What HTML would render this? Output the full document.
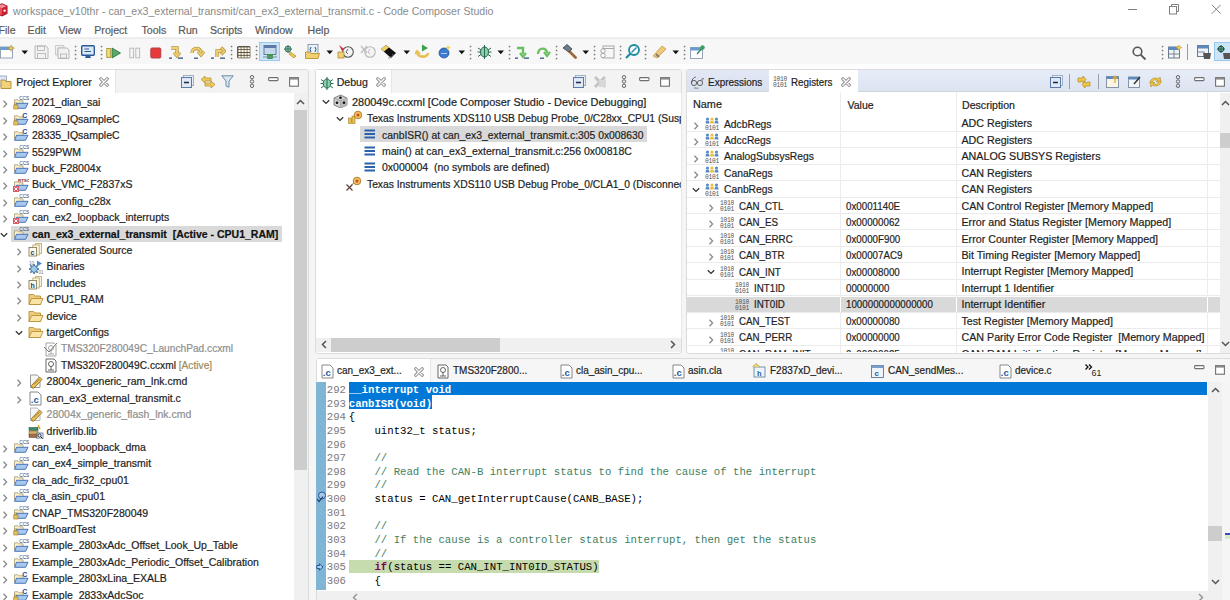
<!DOCTYPE html><html><head><meta charset="utf-8"><style>html,body{margin:0;padding:0;width:1230px;height:600px;overflow:hidden;background:#f0f0f0;position:relative;font-family:"Liberation Sans",sans-serif;}.t{position:absolute;white-space:pre;line-height:14px;height:14px;-webkit-text-stroke:0.2px currentColor;}.r{position:absolute;display:block;}</style></head><body>
<div class="r" style="left:0.0px;top:69.0px;width:1230.0px;height:531.0px;background:#f5f5f5;"></div>
<div class="r" style="left:0.0px;top:0.0px;width:1230.0px;height:37.0px;background:#ffffff;"></div>
<svg class="r" style="left:-4.0px;top:3.0px;" width="12" height="13.5" viewBox="0 0 12 13.5"><path d="M1 3 L6 0.8 L11 3 L11 10.3 L6 12.8 L1 10.3 Z" fill="#e8505a" stroke="#a81828" stroke-width="1.1"/><path d="M1.5 3.2 L6 1.2 L10.5 3.2 L6 5.3 Z" fill="#f49098"/><path d="M6 5.3 L11 3 L11 10.3 L6 12.8 Z" fill="#c82030"/><circle cx="8.6" cy="7.6" r="1.2" fill="#fff"/></svg>
<div class="t" style="left:13.0px;top:3.9px;font-size:10.6px;color:#8a8a8a;-webkit-text-stroke:0;">workspace_v10thr - can_ex3_external_transmit/can_ex3_external_transmit.c - Code Composer Studio</div>
<div class="r" style="left:1128.0px;top:9.0px;width:9.0px;height:1.0px;background:#808080;"></div>
<svg class="r" style="left:1168.5px;top:4.0px;" width="10" height="10.5" viewBox="0 0 10 10.5"><rect x="0.5" y="2.5" width="7" height="7.5" fill="none" stroke="#808080" stroke-width="1"/><path d="M2.5 2.5 V0.5 H9.5 V7.5 H7.5" fill="none" stroke="#808080" stroke-width="1"/></svg>
<svg class="r" style="left:1210.5px;top:4.0px;" width="10.5" height="10.5" viewBox="0 0 10.5 10.5"><path d="M0.8 0.8 L9.7 9.7 M9.7 0.8 L0.8 9.7" stroke="#808080" stroke-width="1"/></svg>
<div class="t" style="left:-1.5px;top:22.6px;font-size:10.6px;color:#5a5a5a;">File</div>
<div class="t" style="left:27.6px;top:22.6px;font-size:10.6px;color:#5a5a5a;">Edit</div>
<div class="t" style="left:58.5px;top:22.6px;font-size:10.6px;color:#5a5a5a;">View</div>
<div class="t" style="left:94.3px;top:22.6px;font-size:10.6px;color:#5a5a5a;">Project</div>
<div class="t" style="left:141.5px;top:22.6px;font-size:10.6px;color:#5a5a5a;">Tools</div>
<div class="t" style="left:178.3px;top:22.6px;font-size:10.6px;color:#5a5a5a;">Run</div>
<div class="t" style="left:210.0px;top:22.6px;font-size:10.6px;color:#5a5a5a;">Scripts</div>
<div class="t" style="left:255.0px;top:22.6px;font-size:10.6px;color:#5a5a5a;">Window</div>
<div class="t" style="left:307.5px;top:22.6px;font-size:10.6px;color:#5a5a5a;">Help</div>
<div class="r" style="left:0.0px;top:37.5px;width:1230.0px;height:1.0px;background:#ececec;"></div>
<div class="r" style="left:0.0px;top:38.5px;width:1230.0px;height:25.5px;background:#f7f7f7;"></div>
<div class="r" style="left:0.0px;top:64.0px;width:1230.0px;height:5.0px;background:#fdfdfd;"></div>
<svg class="r" style="left:0.0px;top:45.0px;" width="15" height="14" viewBox="0 0 15 14"><rect x="0.5" y="2" width="12" height="11" fill="#fff" stroke="#8a9ab0" stroke-width="0.9"/><rect x="0.5" y="2" width="12" height="3" fill="#6a9ad0"/><path d="M11 0 L12 2.5 L14.5 3 L12 4 L11 6.5 L10 4 L7.5 3 L10 2.5 Z" fill="#f0d060" stroke="#b09020" stroke-width="0.5"/></svg>
<svg class="r" style="left:21.0px;top:50.0px;" width="8" height="5" viewBox="0 0 8 5"><path d="M0.5 0.5 L7 0.5 L3.75 4.2 Z" fill="#111"/></svg>
<svg class="r" style="left:34.0px;top:45.0px;" width="15" height="14" viewBox="0 0 15 14"><path d="M1 1 H12 L14 3 V13.5 H1 Z" fill="#f2f2f2" stroke="#b8b8b8" stroke-width="1"/><rect x="3.5" y="1" width="7" height="4.5" fill="none" stroke="#b8b8b8" stroke-width="0.9"/><rect x="3.5" y="8.5" width="8" height="5" fill="none" stroke="#b8b8b8" stroke-width="0.9"/></svg>
<svg class="r" style="left:55.0px;top:45.0px;" width="15" height="14" viewBox="0 0 15 14"><path d="M0.5 0.5 H9 V3 H3 V10 H0.5 Z" fill="#eee" stroke="#c0c0c0" stroke-width="0.8"/><path d="M3 3 H12 L14 5 V13.5 H3 Z" fill="#f2f2f2" stroke="#b8b8b8" stroke-width="1"/><rect x="5.5" y="9" width="6" height="4" fill="none" stroke="#b8b8b8" stroke-width="0.9"/></svg>
<svg class="r" style="left:74.0px;top:45.0px;" width="3" height="15" viewBox="0 0 3 15"><rect x="0.8" y="0.8" width="1.5" height="1.5" fill="#7a7a7a"/><rect x="0.8" y="4.8" width="1.5" height="1.5" fill="#7a7a7a"/><rect x="0.8" y="8.8" width="1.5" height="1.5" fill="#7a7a7a"/><rect x="0.8" y="12.8" width="1.5" height="1.5" fill="#7a7a7a"/></svg>
<svg class="r" style="left:81.0px;top:45.0px;" width="14" height="14" viewBox="0 0 14 14"><rect x="0.7" y="0.7" width="12.6" height="9.5" rx="1" fill="#dde8f4" stroke="#2a5a9a" stroke-width="1.4"/><path d="M3.5 4 H8 M3.5 6.5 H10" stroke="#2a5a9a" stroke-width="1"/><path d="M4 13 H10 L9 10.5 H5 Z" fill="#2a5a9a"/></svg>
<svg class="r" style="left:99.5px;top:45.0px;" width="3" height="15" viewBox="0 0 3 15"><rect x="0.8" y="0.8" width="1.5" height="1.5" fill="#7a7a7a"/><rect x="0.8" y="4.8" width="1.5" height="1.5" fill="#7a7a7a"/><rect x="0.8" y="8.8" width="1.5" height="1.5" fill="#7a7a7a"/><rect x="0.8" y="12.8" width="1.5" height="1.5" fill="#7a7a7a"/></svg>
<svg class="r" style="left:106.0px;top:46.5px;" width="15" height="12" viewBox="0 0 15 12"><rect x="0.8" y="1.5" width="3.5" height="9" fill="#f4e47a" stroke="#a89030" stroke-width="0.9"/><path d="M6 1 L14.5 6 L6 11 Z" fill="#5aaa6a" stroke="#2a6a3a" stroke-width="0.8"/></svg>
<svg class="r" style="left:129.0px;top:46.5px;" width="12" height="12" viewBox="0 0 12 12"><rect x="0.8" y="1.2" width="3.8" height="9.6" fill="#f4f4f4" stroke="#bcbcbc" stroke-width="1"/><rect x="6.8" y="1.2" width="3.8" height="9.6" fill="#f4f4f4" stroke="#bcbcbc" stroke-width="1"/></svg>
<svg class="r" style="left:150.0px;top:46.5px;" width="12" height="12" viewBox="0 0 12 12"><rect x="0.8" y="1" width="10" height="10" rx="1.2" fill="#e8383a" stroke="#b04048" stroke-width="1"/></svg>
<svg class="r" style="left:169.0px;top:45.0px;" width="15" height="14" viewBox="0 0 15 14"><path d="M2 3 H8 L8 9" fill="none" stroke="#b89848" stroke-width="3.4"/><path d="M5 7.5 L8 11 L11 7.5" fill="none" stroke="#b89848" stroke-width="3.2"/><path d="M2 3 H8 L8 9" fill="none" stroke="#f0d070" stroke-width="1.8"/><path d="M5 7.5 L8 11 L11 7.5" fill="none" stroke="#f0d070" stroke-width="1.6"/><path d="M0 13.2 H3 M9 13.2 H14" stroke="#2a4a7a" stroke-width="1.2"/></svg>
<svg class="r" style="left:190.0px;top:45.0px;" width="15" height="14" viewBox="0 0 15 14"><path d="M2 8 C2 2 11 2 11 7.5" fill="none" stroke="#b89848" stroke-width="3.4"/><path d="M8 6.5 L11 10 L14 6.5" fill="none" stroke="#b89848" stroke-width="3.2"/><path d="M2 8 C2 2 11 2 11 7.5" fill="none" stroke="#f0d070" stroke-width="1.8"/><path d="M8 6.5 L11 10 L14 6.5" fill="none" stroke="#f0d070" stroke-width="1.6"/><path d="M4 13.2 H8" stroke="#2a4a7a" stroke-width="1.2"/></svg>
<svg class="r" style="left:211.0px;top:45.0px;" width="15" height="14" viewBox="0 0 15 14"><path d="M6 12 V6 H10.5" fill="none" stroke="#b89848" stroke-width="3.4"/><path d="M10 2.5 L13.5 6 L10 9.5" fill="none" stroke="#b89848" stroke-width="3.2"/><path d="M6 12 V6 H10.5" fill="none" stroke="#f0d070" stroke-width="1.8"/><path d="M10 2.5 L13.5 6 L10 9.5" fill="none" stroke="#f0d070" stroke-width="1.6"/><path d="M0 13.2 H3 M9 13.2 H14" stroke="#2a4a7a" stroke-width="1.2"/></svg>
<svg class="r" style="left:230.0px;top:45.0px;" width="3" height="15" viewBox="0 0 3 15"><rect x="0.8" y="0.8" width="1.5" height="1.5" fill="#7a7a7a"/><rect x="0.8" y="4.8" width="1.5" height="1.5" fill="#7a7a7a"/><rect x="0.8" y="8.8" width="1.5" height="1.5" fill="#7a7a7a"/><rect x="0.8" y="12.8" width="1.5" height="1.5" fill="#7a7a7a"/></svg>
<svg class="r" style="left:237.0px;top:46.0px;" width="14" height="13" viewBox="0 0 14 13"><rect x="0.3" y="0.3" width="13" height="12" rx="1" fill="#2a2010"/><rect x="1.3" y="1.3" width="2.5" height="2.1" fill="#fbf6e4"/><rect x="1.3" y="4.0" width="2.5" height="2.1" fill="#fbf6e4"/><rect x="1.3" y="6.8" width="2.5" height="2.1" fill="#fbf6e4"/><rect x="1.3" y="9.6" width="2.5" height="2.1" fill="#fbf6e4"/><rect x="4.3" y="1.3" width="2.5" height="2.1" fill="#fbf6e4"/><rect x="4.3" y="4.0" width="2.5" height="2.1" fill="#fbf6e4"/><rect x="4.3" y="6.8" width="2.5" height="2.1" fill="#fbf6e4"/><rect x="4.3" y="9.6" width="2.5" height="2.1" fill="#fbf6e4"/><rect x="7.3" y="1.3" width="2.5" height="2.1" fill="#fbf6e4"/><rect x="7.3" y="4.0" width="2.5" height="2.1" fill="#fbf6e4"/><rect x="7.3" y="6.8" width="2.5" height="2.1" fill="#fbf6e4"/><rect x="7.3" y="9.6" width="2.5" height="2.1" fill="#fbf6e4"/><rect x="10.3" y="1.3" width="2.5" height="2.1" fill="#fbf6e4"/><rect x="10.3" y="4.0" width="2.5" height="2.1" fill="#fbf6e4"/><rect x="10.3" y="6.8" width="2.5" height="2.1" fill="#fbf6e4"/><rect x="10.3" y="9.6" width="2.5" height="2.1" fill="#fbf6e4"/></svg>
<svg class="r" style="left:255.4px;top:45.0px;" width="3" height="15" viewBox="0 0 3 15"><rect x="0.8" y="0.8" width="1.5" height="1.5" fill="#7a7a7a"/><rect x="0.8" y="4.8" width="1.5" height="1.5" fill="#7a7a7a"/><rect x="0.8" y="8.8" width="1.5" height="1.5" fill="#7a7a7a"/><rect x="0.8" y="12.8" width="1.5" height="1.5" fill="#7a7a7a"/></svg>
<div class="r" style="left:259.0px;top:41.7px;width:21.0px;height:19.5px;background:#cce4f7;border:1px solid #99c9ef;box-sizing:border-box;"></div>
<svg class="r" style="left:263.0px;top:45.0px;" width="14" height="14" viewBox="0 0 14 14"><rect x="1" y="0.5" width="12" height="9" fill="#c8d8ec" stroke="#5a7090" stroke-width="0.9"/><rect x="1" y="0.5" width="12" height="2.5" fill="#5a7aa8"/><rect x="4" y="9" width="6" height="5" rx="1" fill="#3a9a4a"/><path d="M0 12 H14" stroke="#7a8a9a" stroke-width="1"/></svg>
<svg class="r" style="left:284.0px;top:45.0px;" width="15" height="14" viewBox="0 0 15 14"><circle cx="4" cy="4" r="3" fill="#7ac0a0" stroke="#3a6a5a" stroke-width="0.9"/><path d="M4 0 V8 M0 4 H8" stroke="#3a6a5a" stroke-width="0.8"/><path d="M6 7 L12 11 L10 13 L5 9 Z" fill="#f0c858" stroke="#b08a20" stroke-width="0.7"/></svg>
<svg class="r" style="left:305.0px;top:44.0px;" width="15" height="15" viewBox="0 0 15 15"><rect x="3" y="0.5" width="10" height="10" fill="#e8f0f8" stroke="#7a8aa0" stroke-width="0.8"/><path d="M6 3 L5 5.5 L6 8 M10 3 L11 5.5 L10 8" fill="none" stroke="#1a5a8a" stroke-width="1"/><path d="M0.5 8 L5 8 L6 9.5 L14.5 9.5 L13 14.5 L0.5 14.5 Z" fill="#f0cf70" stroke="#b08a20" stroke-width="0.8"/></svg>
<svg class="r" style="left:325.5px;top:50.0px;" width="8" height="5" viewBox="0 0 8 5"><path d="M0.5 0.5 L7 0.5 L3.75 4.2 Z" fill="#111"/></svg>
<svg class="r" style="left:337.0px;top:44.0px;" width="17" height="15" viewBox="0 0 17 15"><circle cx="11" cy="8" r="5.3" fill="#f4f4f4" stroke="#555" stroke-width="1.1"/><path d="M11 5 L9 8 L11 10" fill="none" stroke="#555" stroke-width="0.9"/><path d="M2 1 L7 5 L5 7 Z" fill="#d82a3a"/><rect x="1" y="8" width="6" height="6" fill="#f0d070" stroke="#a08030" stroke-width="0.7"/></svg>
<svg class="r" style="left:360.0px;top:44.0px;" width="16" height="15" viewBox="0 0 16 15"><circle cx="10" cy="8" r="5.3" fill="#f4f4f4" stroke="#b8b8b8" stroke-width="1.1"/><path d="M10 5 L8 8 L10 10" fill="none" stroke="#b8b8b8" stroke-width="0.9"/><path d="M1 2 L7 9 M7 2 L1 9" stroke="#c0c0c0" stroke-width="1.4"/></svg>
<svg class="r" style="left:380.0px;top:44.0px;" width="17" height="15" viewBox="0 0 17 15"><path d="M1 5 L6 1 L16 9 L11 14 Z" fill="#111"/><path d="M1 5 L6 1 L9 3.5 L4 7.5 Z" fill="#f0d060"/><path d="M9 13 V15 M11 12 V14 M13 10 V12" stroke="#888" stroke-width="0.8"/></svg>
<svg class="r" style="left:402.5px;top:50.0px;" width="8" height="5" viewBox="0 0 8 5"><path d="M0.5 0.5 L7 0.5 L3.75 4.2 Z" fill="#111"/></svg>
<svg class="r" style="left:415.0px;top:44.0px;" width="16" height="15" viewBox="0 0 16 15"><path d="M2 8 C2 14 13 14 13 9" fill="none" stroke="#e8c050" stroke-width="2.6"/><path d="M0 10 L2 7 L5 10" fill="none" stroke="#e8c050" stroke-width="2"/><path d="M7 0.5 L13 4 L7 7.5 Z" fill="#3aa04a"/></svg>
<svg class="r" style="left:438.0px;top:44.0px;" width="14" height="15" viewBox="0 0 14 15"><circle cx="6" cy="9" r="5" fill="#3a7ad0" stroke="#1a4a90" stroke-width="0.7"/><path d="M3 9.5 H9" stroke="#bcd4f0" stroke-width="0.9"/><path d="M10 1 L11 3 L13 3.5 L11 4.5 L10 6.5 L9 4.5 L7 3.5 L9 3 Z" fill="#f0d060"/></svg>
<svg class="r" style="left:457.8px;top:50.0px;" width="8" height="5" viewBox="0 0 8 5"><path d="M0.5 0.5 L7 0.5 L3.75 4.2 Z" fill="#111"/></svg>
<svg class="r" style="left:469.0px;top:45.0px;" width="3" height="15" viewBox="0 0 3 15"><rect x="0.8" y="0.8" width="1.5" height="1.5" fill="#7a7a7a"/><rect x="0.8" y="4.8" width="1.5" height="1.5" fill="#7a7a7a"/><rect x="0.8" y="8.8" width="1.5" height="1.5" fill="#7a7a7a"/><rect x="0.8" y="12.8" width="1.5" height="1.5" fill="#7a7a7a"/></svg>
<svg class="r" style="left:477.0px;top:44.0px;" width="15" height="15" viewBox="0 0 15 15"><ellipse cx="7.5" cy="8" rx="4" ry="5" fill="#8ad0b0" stroke="#2a6a4a" stroke-width="1"/><path d="M7.5 1 V15 M1 4 L4 6 M14 4 L11 6 M0.5 8 H3.5 M14.5 8 H11.5 M1 12.5 L4 10.5 M14 12.5 L11 10.5" stroke="#2a6a4a" stroke-width="1"/></svg>
<svg class="r" style="left:496.8px;top:50.0px;" width="8" height="5" viewBox="0 0 8 5"><path d="M0.5 0.5 L7 0.5 L3.75 4.2 Z" fill="#111"/></svg>
<svg class="r" style="left:508.0px;top:45.0px;" width="3" height="15" viewBox="0 0 3 15"><rect x="0.8" y="0.8" width="1.5" height="1.5" fill="#7a7a7a"/><rect x="0.8" y="4.8" width="1.5" height="1.5" fill="#7a7a7a"/><rect x="0.8" y="8.8" width="1.5" height="1.5" fill="#7a7a7a"/><rect x="0.8" y="12.8" width="1.5" height="1.5" fill="#7a7a7a"/></svg>
<svg class="r" style="left:514.7px;top:45.0px;" width="15" height="14" viewBox="0 0 15 14"><path d="M2 3 H8 L8 9" fill="none" stroke="#6ac060" stroke-width="2.4"/><path d="M5 8 L8 12 L11 8" fill="none" stroke="#6ac060" stroke-width="2.2"/><path d="M0 13.2 H3 M9 13.2 H14" stroke="#2a4a7a" stroke-width="1.2"/></svg>
<svg class="r" style="left:535.8px;top:45.0px;" width="15" height="14" viewBox="0 0 15 14"><path d="M2 9 C2 2 11 2 11 8" fill="none" stroke="#6ac060" stroke-width="2.4"/><path d="M8 7 L11 11 L14 7" fill="none" stroke="#6ac060" stroke-width="2.2"/><path d="M4 13.2 H8" stroke="#2a4a7a" stroke-width="1.2"/></svg>
<svg class="r" style="left:554.5px;top:45.0px;" width="3" height="15" viewBox="0 0 3 15"><rect x="0.8" y="0.8" width="1.5" height="1.5" fill="#7a7a7a"/><rect x="0.8" y="4.8" width="1.5" height="1.5" fill="#7a7a7a"/><rect x="0.8" y="8.8" width="1.5" height="1.5" fill="#7a7a7a"/><rect x="0.8" y="12.8" width="1.5" height="1.5" fill="#7a7a7a"/></svg>
<svg class="r" style="left:562.0px;top:44.0px;" width="15" height="15" viewBox="0 0 15 15"><path d="M6 6 L13.5 13.5" stroke="#9a6a3a" stroke-width="2.8" stroke-linecap="round"/><path d="M1 4 L5 0.5 L10 5 L7 8 Z" fill="#707a88" stroke="#3a4048" stroke-width="0.8"/></svg>
<svg class="r" style="left:581.7px;top:50.0px;" width="8" height="5" viewBox="0 0 8 5"><path d="M0.5 0.5 L7 0.5 L3.75 4.2 Z" fill="#111"/></svg>
<svg class="r" style="left:593.0px;top:45.0px;" width="3" height="15" viewBox="0 0 3 15"><rect x="0.8" y="0.8" width="1.5" height="1.5" fill="#7a7a7a"/><rect x="0.8" y="4.8" width="1.5" height="1.5" fill="#7a7a7a"/><rect x="0.8" y="8.8" width="1.5" height="1.5" fill="#7a7a7a"/><rect x="0.8" y="12.8" width="1.5" height="1.5" fill="#7a7a7a"/></svg>
<svg class="r" style="left:599.6px;top:45.0px;" width="15" height="14" viewBox="0 0 15 14"><rect x="3" y="1" width="11" height="12" fill="#f6f6f6" stroke="#a8a8a8" stroke-width="1"/><path d="M3 3.5 H14" stroke="#a8a8a8" stroke-width="1"/><circle cx="3" cy="6" r="2.2" fill="#fff" stroke="#999" stroke-width="0.9"/><circle cx="3" cy="10.5" r="2.2" fill="#fff" stroke="#999" stroke-width="0.9"/></svg>
<svg class="r" style="left:619.0px;top:45.0px;" width="3" height="15" viewBox="0 0 3 15"><rect x="0.8" y="0.8" width="1.5" height="1.5" fill="#7a7a7a"/><rect x="0.8" y="4.8" width="1.5" height="1.5" fill="#7a7a7a"/><rect x="0.8" y="8.8" width="1.5" height="1.5" fill="#7a7a7a"/><rect x="0.8" y="12.8" width="1.5" height="1.5" fill="#7a7a7a"/></svg>
<svg class="r" style="left:624.8px;top:44.0px;" width="15" height="15" viewBox="0 0 15 15"><circle cx="9" cy="6" r="5" fill="none" stroke="#1a8aa0" stroke-width="1.8"/><path d="M5.5 9.5 L1 14" stroke="#1a8aa0" stroke-width="2.2"/><path d="M6.5 8.5 L11.5 3.5" stroke="#1a8aa0" stroke-width="1.2"/></svg>
<svg class="r" style="left:644.0px;top:45.0px;" width="3" height="15" viewBox="0 0 3 15"><rect x="0.8" y="0.8" width="1.5" height="1.5" fill="#7a7a7a"/><rect x="0.8" y="4.8" width="1.5" height="1.5" fill="#7a7a7a"/><rect x="0.8" y="8.8" width="1.5" height="1.5" fill="#7a7a7a"/><rect x="0.8" y="12.8" width="1.5" height="1.5" fill="#7a7a7a"/></svg>
<svg class="r" style="left:651.6px;top:44.0px;" width="15" height="15" viewBox="0 0 15 15"><path d="M1 12 L10 2 L14 5 L5 14 Z" fill="#f0c878" stroke="#c09040" stroke-width="0.7"/><path d="M4 10 L7 13" stroke="#8a7a6a" stroke-width="2"/></svg>
<svg class="r" style="left:672.0px;top:50.0px;" width="8" height="5" viewBox="0 0 8 5"><path d="M0.5 0.5 L7 0.5 L3.75 4.2 Z" fill="#111"/></svg>
<svg class="r" style="left:683.0px;top:45.0px;" width="3" height="15" viewBox="0 0 3 15"><rect x="0.8" y="0.8" width="1.5" height="1.5" fill="#7a7a7a"/><rect x="0.8" y="4.8" width="1.5" height="1.5" fill="#7a7a7a"/><rect x="0.8" y="8.8" width="1.5" height="1.5" fill="#7a7a7a"/><rect x="0.8" y="12.8" width="1.5" height="1.5" fill="#7a7a7a"/></svg>
<svg class="r" style="left:690.0px;top:45.0px;" width="15" height="14" viewBox="0 0 15 14"><rect x="0.5" y="2.5" width="12" height="11" fill="#fff" stroke="#8a9ab0" stroke-width="0.9"/><rect x="0.5" y="2.5" width="12" height="3" fill="#6a9ad0"/><path d="M7 9 L13 2" stroke="#2a8a4a" stroke-width="1.2"/><circle cx="12.5" cy="2.5" r="2.2" fill="#3aa05a"/></svg>
<svg class="r" style="left:1132.0px;top:45.5px;" width="15" height="14" viewBox="0 0 15 14"><circle cx="5.5" cy="5.5" r="4.3" fill="none" stroke="#555" stroke-width="1.6"/><path d="M8.6 8.6 L13.5 13.5" stroke="#555" stroke-width="1.9"/></svg>
<svg class="r" style="left:1161.0px;top:45.0px;" width="3" height="15" viewBox="0 0 3 15"><rect x="0.8" y="0.8" width="1.5" height="1.5" fill="#7a7a7a"/><rect x="0.8" y="4.8" width="1.5" height="1.5" fill="#7a7a7a"/><rect x="0.8" y="8.8" width="1.5" height="1.5" fill="#7a7a7a"/><rect x="0.8" y="12.8" width="1.5" height="1.5" fill="#7a7a7a"/></svg>
<svg class="r" style="left:1167.5px;top:45.0px;" width="14" height="14" viewBox="0 0 14 14"><rect x="0.5" y="2" width="11" height="11" fill="#f0f4f8" stroke="#6a7a8a" stroke-width="1"/><rect x="0.5" y="2" width="11" height="3" fill="#5a8ac0"/><path d="M6 5 V13 M0.5 9 H11.5" stroke="#6a7a8a" stroke-width="0.9"/><path d="M11 0 L12 2 L14 2.5 L12 3.5 L11 5.5 L10 3.5 L8 2.5 L10 2 Z" fill="#f0d060" stroke="#c09a30" stroke-width="0.5"/></svg>
<div class="r" style="left:1187.0px;top:44.0px;width:1.0px;height:16.0px;background:#9a9a9a;"></div>
<svg class="r" style="left:1196.7px;top:45.0px;" width="14" height="14" viewBox="0 0 14 14"><rect x="0.5" y="0.5" width="11" height="11" fill="#f0f4f8" stroke="#6a7a8a" stroke-width="1"/><rect x="0.5" y="0.5" width="11" height="3" fill="#5a8ac0"/><path d="M0.5 7 H8" stroke="#6a7a8a" stroke-width="0.9"/><path d="M6 8 H14 L13 14 H7 Z" fill="#555"/></svg>
<div class="r" style="left:1213.6px;top:41.8px;width:20.0px;height:19.0px;background:#cce4f7;border:1px solid #99c9ef;box-sizing:border-box;"></div>
<svg class="r" style="left:1217.0px;top:45.0px;" width="13" height="14" viewBox="0 0 13 14"><circle cx="4" cy="4" r="2.8" fill="#7ac0a0" stroke="#1a4a3a" stroke-width="1"/><path d="M4 0 V8 M0 4 H8" stroke="#1a4a3a" stroke-width="0.9"/><path d="M6 8 H14 L13 14 H7 Z" fill="#555"/></svg>
<div class="r" style="left:-4px;top:69px;width:313px;height:540px;border:1px solid #dcdcdc;border-radius:3px;background:#fff;box-sizing:border-box;"></div>
<div class="r" style="left:-3.0px;top:70.0px;width:311.0px;height:22.5px;background:#f3f3f3;"></div>
<div class="r" style="left:-3.0px;top:70.0px;width:118.0px;height:22.5px;background:#ffffff;"></div>
<div class="r" style="left:115.0px;top:70.0px;width:1.0px;height:22.5px;background:#e6e6e6;"></div>
<svg class="r" style="left:-2.0px;top:74.5px;" width="14" height="14" viewBox="0 0 14 14"><rect x="0.5" y="1" width="8" height="10" fill="#dfe8f8" stroke="#8a9ab8" stroke-width="0.8"/><path d="M3 5 L7 5 L8 6.5 L13 6.5 L13 13.5 L3 13.5 Z" fill="#f2d278" stroke="#b08a30" stroke-width="0.9"/></svg>
<div class="t" style="left:16.3px;top:75.1px;font-size:10.6px;color:#1e1e1e;">Project Explorer</div>
<svg class="r" style="left:99.0px;top:76.8px;" width="10" height="10" viewBox="0 0 10 10"><path d="M1.8 1.8 L8.2 8.2 M8.2 1.8 L1.8 8.2" stroke="#8a8a8a" stroke-width="3.2" stroke-linecap="round"/><path d="M1.8 1.8 L8.2 8.2 M8.2 1.8 L1.8 8.2" stroke="#fff" stroke-width="1.3" stroke-linecap="round"/></svg>
<svg class="r" style="left:180.5px;top:75.0px;" width="14" height="14" viewBox="0 0 14 14"><rect x="2.5" y="0.5" width="10" height="10" fill="#e8eef6" stroke="#9aaac0" stroke-width="0.9"/><rect x="0.5" y="2.5" width="10" height="10" fill="#dfe8f4" stroke="#5a7aa8" stroke-width="1"/><path d="M3 7.5 L8 7.5" stroke="#1a2a4a" stroke-width="1.5"/></svg>
<svg class="r" style="left:199.5px;top:74.5px;" width="16" height="14" viewBox="0 0 16 14"><path d="M1 4.5 L5 1 L5 3 H11 V6 H5 V8 Z" fill="#f0c858" stroke="#b08a30" stroke-width="0.7"/><path d="M15 9.5 L11 6 L11 8 H5 V11 H11 V13 Z" fill="#f0c858" stroke="#b08a30" stroke-width="0.7"/></svg>
<svg class="r" style="left:221.0px;top:75.0px;" width="13" height="13" viewBox="0 0 13 13"><path d="M0.8 0.8 H12.2 L8 6 V12.2 L5 11 V6 Z" fill="#dce8f0" stroke="#6a8aa8" stroke-width="1"/></svg>
<svg class="r" style="left:249.0px;top:75.0px;" width="6" height="13" viewBox="0 0 6 13"><circle cx="3" cy="2.2" r="1.7" fill="none" stroke="#666" stroke-width="1"/><circle cx="3" cy="6.5" r="1.7" fill="none" stroke="#666" stroke-width="1"/><circle cx="3" cy="10.8" r="1.7" fill="none" stroke="#666" stroke-width="1"/></svg>
<svg class="r" style="left:267.5px;top:76.5px;" width="11" height="5" viewBox="0 0 11 5"><rect x="0.6" y="0.6" width="9.4" height="3" rx="0.8" fill="#fff" stroke="#707070" stroke-width="1.1"/></svg>
<svg class="r" style="left:288.5px;top:76.5px;" width="10" height="10" viewBox="0 0 10 10"><rect x="0.6" y="0.6" width="8.8" height="8.6" fill="#fff" stroke="#707070" stroke-width="1.1"/><rect x="0.6" y="0.6" width="8.8" height="2" fill="#8a8a8a"/></svg>
<div class="r" style="left:293.8px;top:92.5px;width:14.0px;height:508.0px;background:#f0f0f0;"></div>
<svg class="r" style="left:296.3px;top:99.0px;" width="9" height="6" viewBox="0 0 9 6"><path d="M1 5 L4.5 1.5 L8 5" fill="none" stroke="#555" stroke-width="1.5"/></svg>
<div class="r" style="left:293.8px;top:109.5px;width:13.7px;height:360.5px;background:#cdcdcd;"></div>
<svg class="r" style="left:1.5px;top:100.4px;" width="6" height="8" viewBox="0 0 6 8"><path d="M1.5 0.8 L4.6 4 L1.5 7.2" fill="none" stroke="#8a8a8a" stroke-width="1.3"/></svg>
<svg class="r" style="left:12.5px;top:95.5px;" width="16" height="15" viewBox="0 0 16 15"><path d="M1.5 3.8 L5 3.8 L6 4.8 L10 4.8 L10 11 L1.5 11 Z" fill="#fbf0cc" stroke="#a89a70" stroke-width="0.8"/><path d="M3.5 7.3 L15 7.3 L12.5 12.3 L1.5 12.3 Z" fill="#a6c8f0" stroke="#3a6ab0" stroke-width="0.9"/><text x="6.2" y="4.1" font-size="4.8" font-family="Liberation Sans" fill="#2a3f7a">CCS</text><rect x="0.8" y="9" width="4.2" height="4" fill="#e8c058" stroke="#a0782a" stroke-width="0.6"/><path d="M1.7 9 V7.8 a1.2 1.2 0 0 1 2.4 0 V9" fill="none" stroke="#a0782a" stroke-width="0.6"/></svg>
<div class="t" style="left:32.0px;top:95.3px;font-size:10.5px;color:#1e1e1e;">2021_dian_sai</div>
<svg class="r" style="left:1.5px;top:116.8px;" width="6" height="8" viewBox="0 0 6 8"><path d="M1.5 0.8 L4.6 4 L1.5 7.2" fill="none" stroke="#8a8a8a" stroke-width="1.3"/></svg>
<svg class="r" style="left:12.5px;top:111.9px;" width="16" height="15" viewBox="0 0 16 15"><path d="M1.5 3.8 L5 3.8 L6 4.8 L10 4.8 L10 11 L1.5 11 Z" fill="#fbf0cc" stroke="#a89a70" stroke-width="0.8"/><path d="M3.5 7.3 L15 7.3 L12.5 12.3 L1.5 12.3 Z" fill="#a6c8f0" stroke="#3a6ab0" stroke-width="0.9"/><text x="9.3" y="5.6" font-size="7" font-family="Liberation Sans" fill="#2a3f7a" font-weight="bold">C</text><rect x="0.8" y="9" width="4.2" height="4" fill="#e8c058" stroke="#a0782a" stroke-width="0.6"/><path d="M1.7 9 V7.8 a1.2 1.2 0 0 1 2.4 0 V9" fill="none" stroke="#a0782a" stroke-width="0.6"/></svg>
<div class="t" style="left:32.0px;top:111.7px;font-size:10.5px;color:#1e1e1e;">28069_IQsampleC</div>
<svg class="r" style="left:1.5px;top:133.2px;" width="6" height="8" viewBox="0 0 6 8"><path d="M1.5 0.8 L4.6 4 L1.5 7.2" fill="none" stroke="#8a8a8a" stroke-width="1.3"/></svg>
<svg class="r" style="left:12.5px;top:128.3px;" width="16" height="15" viewBox="0 0 16 15"><path d="M1.5 3.8 L5 3.8 L6 4.8 L10 4.8 L10 11 L1.5 11 Z" fill="#fbf0cc" stroke="#a89a70" stroke-width="0.8"/><path d="M3.5 7.3 L15 7.3 L12.5 12.3 L1.5 12.3 Z" fill="#a6c8f0" stroke="#3a6ab0" stroke-width="0.9"/><text x="9.3" y="5.6" font-size="7" font-family="Liberation Sans" fill="#2a3f7a" font-weight="bold">C</text></svg>
<div class="t" style="left:32.0px;top:128.1px;font-size:10.5px;color:#1e1e1e;">28335_IQsampleC</div>
<svg class="r" style="left:1.5px;top:149.6px;" width="6" height="8" viewBox="0 0 6 8"><path d="M1.5 0.8 L4.6 4 L1.5 7.2" fill="none" stroke="#8a8a8a" stroke-width="1.3"/></svg>
<svg class="r" style="left:12.5px;top:144.7px;" width="16" height="15" viewBox="0 0 16 15"><path d="M1.5 3.8 L5 3.8 L6 4.8 L10 4.8 L10 11 L1.5 11 Z" fill="#fbf0cc" stroke="#a89a70" stroke-width="0.8"/><path d="M3.5 7.3 L15 7.3 L12.5 12.3 L1.5 12.3 Z" fill="#a6c8f0" stroke="#3a6ab0" stroke-width="0.9"/><text x="6.2" y="4.1" font-size="4.8" font-family="Liberation Sans" fill="#2a3f7a">CCS</text></svg>
<div class="t" style="left:32.0px;top:144.5px;font-size:10.5px;color:#1e1e1e;">5529PWM</div>
<svg class="r" style="left:1.5px;top:166.0px;" width="6" height="8" viewBox="0 0 6 8"><path d="M1.5 0.8 L4.6 4 L1.5 7.2" fill="none" stroke="#8a8a8a" stroke-width="1.3"/></svg>
<svg class="r" style="left:12.5px;top:161.1px;" width="16" height="15" viewBox="0 0 16 15"><path d="M1.5 3.8 L5 3.8 L6 4.8 L10 4.8 L10 11 L1.5 11 Z" fill="#fbf0cc" stroke="#a89a70" stroke-width="0.8"/><path d="M3.5 7.3 L15 7.3 L12.5 12.3 L1.5 12.3 Z" fill="#a6c8f0" stroke="#3a6ab0" stroke-width="0.9"/><text x="6.2" y="4.1" font-size="4.8" font-family="Liberation Sans" fill="#2a3f7a">CCS</text></svg>
<div class="t" style="left:32.0px;top:160.9px;font-size:10.5px;color:#1e1e1e;">buck_F28004x</div>
<svg class="r" style="left:1.5px;top:182.4px;" width="6" height="8" viewBox="0 0 6 8"><path d="M1.5 0.8 L4.6 4 L1.5 7.2" fill="none" stroke="#8a8a8a" stroke-width="1.3"/></svg>
<svg class="r" style="left:12.5px;top:177.5px;" width="16" height="15" viewBox="0 0 16 15"><path d="M1.5 3.8 L5 3.8 L6 4.8 L10 4.8 L10 11 L1.5 11 Z" fill="#fbf0cc" stroke="#a89a70" stroke-width="0.8"/><path d="M3.5 7.3 L15 7.3 L12.5 12.3 L1.5 12.3 Z" fill="#a6c8f0" stroke="#3a6ab0" stroke-width="0.9"/><text x="5" y="4.1" font-size="4.4" font-family="Liberation Sans" fill="#7a2a2a" font-weight="bold">RTSC</text><rect x="0" y="8" width="6" height="6" fill="#d85a6a"/><path d="M1.3 9.3 L4.7 12.7 M4.7 9.3 L1.3 12.7" stroke="#fff" stroke-width="1"/></svg>
<div class="t" style="left:32.0px;top:177.3px;font-size:10.5px;color:#1e1e1e;">Buck_VMC_F2837xS</div>
<svg class="r" style="left:1.5px;top:198.9px;" width="6" height="8" viewBox="0 0 6 8"><path d="M1.5 0.8 L4.6 4 L1.5 7.2" fill="none" stroke="#8a8a8a" stroke-width="1.3"/></svg>
<svg class="r" style="left:12.5px;top:194.0px;" width="16" height="15" viewBox="0 0 16 15"><path d="M1.5 3.8 L5 3.8 L6 4.8 L10 4.8 L10 11 L1.5 11 Z" fill="#fbf0cc" stroke="#a89a70" stroke-width="0.8"/><path d="M3.5 7.3 L15 7.3 L12.5 12.3 L1.5 12.3 Z" fill="#a6c8f0" stroke="#3a6ab0" stroke-width="0.9"/><text x="6.2" y="4.1" font-size="4.8" font-family="Liberation Sans" fill="#2a3f7a">CCS</text></svg>
<div class="t" style="left:32.0px;top:193.7px;font-size:10.5px;color:#1e1e1e;">can_config_c28x</div>
<svg class="r" style="left:1.5px;top:215.3px;" width="6" height="8" viewBox="0 0 6 8"><path d="M1.5 0.8 L4.6 4 L1.5 7.2" fill="none" stroke="#8a8a8a" stroke-width="1.3"/></svg>
<svg class="r" style="left:12.5px;top:210.4px;" width="16" height="15" viewBox="0 0 16 15"><path d="M1.5 3.8 L5 3.8 L6 4.8 L10 4.8 L10 11 L1.5 11 Z" fill="#fbf0cc" stroke="#a89a70" stroke-width="0.8"/><path d="M3.5 7.3 L15 7.3 L12.5 12.3 L1.5 12.3 Z" fill="#a6c8f0" stroke="#3a6ab0" stroke-width="0.9"/><text x="6.2" y="4.1" font-size="4.8" font-family="Liberation Sans" fill="#2a3f7a">CCS</text><rect x="0" y="8" width="6" height="6" fill="#d85a6a"/><path d="M1.3 9.3 L4.7 12.7 M4.7 9.3 L1.3 12.7" stroke="#fff" stroke-width="1"/></svg>
<div class="t" style="left:32.0px;top:210.1px;font-size:10.5px;color:#1e1e1e;">can_ex2_loopback_interrupts</div>
<div class="r" style="left:11.0px;top:225.5px;width:271.0px;height:16.3px;background:#d9d9d9;"></div>
<svg class="r" style="left:0.0px;top:231.7px;" width="8" height="6" viewBox="0 0 8 6"><path d="M0.8 1.2 L4 4.4 L7.2 1.2" fill="none" stroke="#333" stroke-width="1.3"/></svg>
<svg class="r" style="left:12.5px;top:226.8px;" width="16" height="15" viewBox="0 0 16 15"><path d="M1.5 3.8 L5 3.8 L6 4.8 L10 4.8 L10 11 L1.5 11 Z" fill="#fbf0cc" stroke="#a89a70" stroke-width="0.8"/><path d="M3.5 7.3 L15 7.3 L12.5 12.3 L1.5 12.3 Z" fill="#a6c8f0" stroke="#3a6ab0" stroke-width="0.9"/><text x="6.2" y="4.1" font-size="4.8" font-family="Liberation Sans" fill="#2a3f7a">CCS</text></svg>
<div class="t" style="left:32.0px;top:226.5px;font-size:10.5px;color:#111;font-weight:bold;">can_ex3_external_transmit  [Active - CPU1_RAM]</div>
<svg class="r" style="left:16.1px;top:248.1px;" width="6" height="8" viewBox="0 0 6 8"><path d="M1.5 0.8 L4.6 4 L1.5 7.2" fill="none" stroke="#8a8a8a" stroke-width="1.3"/></svg>
<svg class="r" style="left:28.1px;top:243.1px;" width="16" height="15" viewBox="0 0 16 15"><rect x="7.5" y="0.5" width="6" height="10" fill="#faf4dc" stroke="#c0ae78" stroke-width="0.9"/><rect x="4.8" y="2" width="6.5" height="10" fill="#faf4dc" stroke="#c0ae78" stroke-width="0.9"/><rect x="1" y="4.5" width="7.5" height="8.5" fill="#fdfaf0" stroke="#8a8060" stroke-width="0.9"/><text x="2.6" y="11.6" font-size="7" font-family="Liberation Sans" fill="#2a3a6a" font-weight="bold">c</text></svg>
<div class="t" style="left:46.6px;top:243.0px;font-size:10.5px;color:#1e1e1e;">Generated Source</div>
<svg class="r" style="left:16.1px;top:264.5px;" width="6" height="8" viewBox="0 0 6 8"><path d="M1.5 0.8 L4.6 4 L1.5 7.2" fill="none" stroke="#8a8a8a" stroke-width="1.3"/></svg>
<svg class="r" style="left:28.1px;top:259.5px;" width="16" height="15" viewBox="0 0 16 15"><polygon points="11.00,9.00 8.59,10.07 9.54,12.54 7.07,11.59 6.00,14.00 4.93,11.59 2.46,12.54 3.41,10.07 1.00,9.00 3.41,7.93 2.46,5.46 4.93,6.41 6.00,4.00 7.07,6.41 9.54,5.46 8.59,7.93" fill="#9ccbe8" stroke="#2a5a8a" stroke-width="0.8"/><path d="M9 0.5 L14 3.5 L9 6.5 Z" fill="#4a8ac8"/><text x="1" y="4.5" font-size="4.5" font-family="Liberation Sans" fill="#777">10</text><text x="10.5" y="14" font-size="4.5" font-family="Liberation Sans" fill="#777">01</text></svg>
<div class="t" style="left:46.6px;top:259.4px;font-size:10.5px;color:#1e1e1e;">Binaries</div>
<svg class="r" style="left:16.1px;top:280.9px;" width="6" height="8" viewBox="0 0 6 8"><path d="M1.5 0.8 L4.6 4 L1.5 7.2" fill="none" stroke="#8a8a8a" stroke-width="1.3"/></svg>
<svg class="r" style="left:28.1px;top:275.9px;" width="16" height="15" viewBox="0 0 16 15"><rect x="7.5" y="0.5" width="6" height="10" fill="#faf4dc" stroke="#c0ae78" stroke-width="0.9"/><rect x="4.8" y="2" width="6.5" height="10" fill="#faf4dc" stroke="#c0ae78" stroke-width="0.9"/><rect x="1" y="4.5" width="7.5" height="8.5" fill="#fdfaf0" stroke="#8a8060" stroke-width="0.9"/><text x="2.6" y="11.6" font-size="7" font-family="Liberation Sans" fill="#2a3a6a" font-weight="bold">h</text></svg>
<div class="t" style="left:46.6px;top:275.8px;font-size:10.5px;color:#1e1e1e;">Includes</div>
<svg class="r" style="left:16.1px;top:297.3px;" width="6" height="8" viewBox="0 0 6 8"><path d="M1.5 0.8 L4.6 4 L1.5 7.2" fill="none" stroke="#8a8a8a" stroke-width="1.3"/></svg>
<svg class="r" style="left:28.1px;top:292.3px;" width="16" height="15" viewBox="0 0 16 15"><path d="M1 2.5 L5.5 2.5 L7 4 L12.5 4 L12.5 12.5 L1 12.5 Z" fill="#f0cc78" stroke="#b8903a" stroke-width="0.9"/><path d="M3.5 6.5 L15 6.5 L12.5 12.5 L1 12.5 Z" fill="#fae3a4" stroke="#b8903a" stroke-width="0.9"/></svg>
<div class="t" style="left:46.6px;top:292.2px;font-size:10.5px;color:#1e1e1e;">CPU1_RAM</div>
<svg class="r" style="left:16.1px;top:313.7px;" width="6" height="8" viewBox="0 0 6 8"><path d="M1.5 0.8 L4.6 4 L1.5 7.2" fill="none" stroke="#8a8a8a" stroke-width="1.3"/></svg>
<svg class="r" style="left:28.1px;top:308.7px;" width="16" height="15" viewBox="0 0 16 15"><path d="M1 2.5 L5.5 2.5 L7 4 L12.5 4 L12.5 12.5 L1 12.5 Z" fill="#f0cc78" stroke="#b8903a" stroke-width="0.9"/><path d="M3.5 6.5 L15 6.5 L12.5 12.5 L1 12.5 Z" fill="#fae3a4" stroke="#b8903a" stroke-width="0.9"/></svg>
<div class="t" style="left:46.6px;top:308.6px;font-size:10.5px;color:#1e1e1e;">device</div>
<svg class="r" style="left:14.6px;top:330.1px;" width="8" height="6" viewBox="0 0 8 6"><path d="M0.8 1.2 L4 4.4 L7.2 1.2" fill="none" stroke="#333" stroke-width="1.3"/></svg>
<svg class="r" style="left:28.1px;top:325.1px;" width="16" height="15" viewBox="0 0 16 15"><path d="M1 2.5 L5.5 2.5 L7 4 L12.5 4 L12.5 12.5 L1 12.5 Z" fill="#f0cc78" stroke="#b8903a" stroke-width="0.9"/><path d="M3.5 6.5 L15 6.5 L12.5 12.5 L1 12.5 Z" fill="#fae3a4" stroke="#b8903a" stroke-width="0.9"/></svg>
<div class="t" style="left:46.6px;top:325.0px;font-size:10.5px;color:#1e1e1e;">targetConfigs</div>
<svg class="r" style="left:42.7px;top:341.6px;" width="16" height="15" viewBox="0 0 16 15"><path d="M3 1 L11 1 L13 3 L13 14 L3 14 Z" fill="#fff" stroke="#9a9a9a" stroke-width="0.9"/><circle cx="8" cy="6" r="2.5" fill="none" stroke="#9a9a9a" stroke-width="0.9"/><path d="M8 8 L8 12 M5 12 L11 12" stroke="#9a9a9a" stroke-width="0.9"/><path d="M1 5 L6 10 L14 1" fill="none" stroke="#777" stroke-width="1"/></svg>
<div class="t" style="left:61.2px;top:341.4px;font-size:10.5px;color:#8e8e8e;transform:scaleX(0.97);transform-origin:0 0;">TMS320F280049C_LaunchPad.ccxml</div>
<svg class="r" style="left:42.7px;top:358.0px;" width="16" height="15" viewBox="0 0 16 15"><path d="M3 1 L11 1 L13 3 L13 14 L3 14 Z" fill="#fff" stroke="#555" stroke-width="0.9"/><circle cx="8" cy="6" r="2.5" fill="none" stroke="#555" stroke-width="0.9"/><path d="M8 8 L8 12 M5 12 L11 12" stroke="#555" stroke-width="0.9"/></svg>
<div class="t" style="left:61.2px;top:357.8px;font-size:10.5px;color:#1e1e1e;transform:scaleX(0.97);transform-origin:0 0;">TMS320F280049C.ccxml <span style="color:#a08a5a">[Active]</span></div>
<svg class="r" style="left:16.1px;top:379.4px;" width="6" height="8" viewBox="0 0 6 8"><path d="M1.5 0.8 L4.6 4 L1.5 7.2" fill="none" stroke="#8a8a8a" stroke-width="1.3"/></svg>
<svg class="r" style="left:28.1px;top:374.4px;" width="16" height="15" viewBox="0 0 16 15"><path d="M2.5 1 L9 1 L12 4 L12 13.5 L2.5 13.5 Z" fill="#f6f6f6" stroke="#909090" stroke-width="0.9"/><path d="M4 14 L3.5 11.5 L11.5 3 L14 5.5 L6 14 Z" fill="#ecc450" stroke="#806020" stroke-width="0.8"/><path d="M6 10.5 L11.5 5" stroke="#806020" stroke-width="0.7"/></svg>
<div class="t" style="left:46.6px;top:374.2px;font-size:10.5px;color:#1e1e1e;">28004x_generic_ram_lnk.cmd</div>
<svg class="r" style="left:16.1px;top:395.8px;" width="6" height="8" viewBox="0 0 6 8"><path d="M1.5 0.8 L4.6 4 L1.5 7.2" fill="none" stroke="#8a8a8a" stroke-width="1.3"/></svg>
<svg class="r" style="left:28.1px;top:390.8px;" width="16" height="15" viewBox="0 0 16 15"><path d="M2 1 L10 1 L13 4 L13 14 L2 14 Z" fill="#fff" stroke="#7a7a7a" stroke-width="0.9"/><text x="2.8" y="12" font-size="9.5" font-family="Liberation Sans" fill="#2a5aa0" font-weight="bold">.c</text></svg>
<div class="t" style="left:46.6px;top:390.6px;font-size:10.5px;color:#1e1e1e;">can_ex3_external_transmit.c</div>
<svg class="r" style="left:28.1px;top:407.2px;" width="16" height="15" viewBox="0 0 16 15"><path d="M2.5 1 L9 1 L12 4 L12 13.5 L2.5 13.5 Z" fill="#f6f6f6" stroke="#b0b0b0" stroke-width="0.9"/><path d="M4 14 L3.5 11.5 L11.5 3 L14 5.5 L6 14 Z" fill="#ecc450" stroke="#806020" stroke-width="0.8"/><path d="M6 10.5 L11.5 5" stroke="#806020" stroke-width="0.7"/></svg>
<div class="t" style="left:46.6px;top:407.1px;font-size:10.5px;color:#8e8e8e;">28004x_generic_flash_lnk.cmd</div>
<svg class="r" style="left:28.1px;top:423.6px;" width="16" height="15" viewBox="0 0 16 15"><rect x="1" y="3.5" width="9" height="3" fill="#3a8a6a" stroke="#1a4a3a" stroke-width="0.5"/><rect x="1" y="7" width="9" height="3" fill="#d8b060" stroke="#806030" stroke-width="0.5"/><rect x="1" y="10.5" width="9" height="3" fill="#a86a40" stroke="#5a3a20" stroke-width="0.5"/><path d="M10 1 L12 5" stroke="#e0a020" stroke-width="1.6"/><rect x="9" y="9" width="6" height="6" fill="#e8f0f8" stroke="#3a5a8a" stroke-width="0.7"/><circle cx="11.5" cy="11.5" r="1.6" fill="none" stroke="#222" stroke-width="0.9"/><path d="M12.6 12.6 L14.3 14.3" stroke="#222" stroke-width="1"/></svg>
<div class="t" style="left:46.6px;top:423.5px;font-size:10.5px;color:#1e1e1e;">driverlib.lib</div>
<svg class="r" style="left:1.5px;top:445.0px;" width="6" height="8" viewBox="0 0 6 8"><path d="M1.5 0.8 L4.6 4 L1.5 7.2" fill="none" stroke="#8a8a8a" stroke-width="1.3"/></svg>
<svg class="r" style="left:12.5px;top:440.1px;" width="16" height="15" viewBox="0 0 16 15"><path d="M1.5 3.8 L5 3.8 L6 4.8 L10 4.8 L10 11 L1.5 11 Z" fill="#fbf0cc" stroke="#a89a70" stroke-width="0.8"/><path d="M3.5 7.3 L15 7.3 L12.5 12.3 L1.5 12.3 Z" fill="#a6c8f0" stroke="#3a6ab0" stroke-width="0.9"/><text x="6.2" y="4.1" font-size="4.8" font-family="Liberation Sans" fill="#2a3f7a">CCS</text></svg>
<div class="t" style="left:32.0px;top:439.9px;font-size:10.5px;color:#1e1e1e;">can_ex4_loopback_dma</div>
<svg class="r" style="left:1.5px;top:461.4px;" width="6" height="8" viewBox="0 0 6 8"><path d="M1.5 0.8 L4.6 4 L1.5 7.2" fill="none" stroke="#8a8a8a" stroke-width="1.3"/></svg>
<svg class="r" style="left:12.5px;top:456.5px;" width="16" height="15" viewBox="0 0 16 15"><path d="M1.5 3.8 L5 3.8 L6 4.8 L10 4.8 L10 11 L1.5 11 Z" fill="#fbf0cc" stroke="#a89a70" stroke-width="0.8"/><path d="M3.5 7.3 L15 7.3 L12.5 12.3 L1.5 12.3 Z" fill="#a6c8f0" stroke="#3a6ab0" stroke-width="0.9"/><text x="6.2" y="4.1" font-size="4.8" font-family="Liberation Sans" fill="#2a3f7a">CCS</text></svg>
<div class="t" style="left:32.0px;top:456.3px;font-size:10.5px;color:#1e1e1e;">can_ex4_simple_transmit</div>
<svg class="r" style="left:1.5px;top:477.8px;" width="6" height="8" viewBox="0 0 6 8"><path d="M1.5 0.8 L4.6 4 L1.5 7.2" fill="none" stroke="#8a8a8a" stroke-width="1.3"/></svg>
<svg class="r" style="left:12.5px;top:472.9px;" width="16" height="15" viewBox="0 0 16 15"><path d="M1.5 3.8 L5 3.8 L6 4.8 L10 4.8 L10 11 L1.5 11 Z" fill="#fbf0cc" stroke="#a89a70" stroke-width="0.8"/><path d="M3.5 7.3 L15 7.3 L12.5 12.3 L1.5 12.3 Z" fill="#a6c8f0" stroke="#3a6ab0" stroke-width="0.9"/><text x="6.2" y="4.1" font-size="4.8" font-family="Liberation Sans" fill="#2a3f7a">CCS</text></svg>
<div class="t" style="left:32.0px;top:472.7px;font-size:10.5px;color:#1e1e1e;">cla_adc_fir32_cpu01</div>
<svg class="r" style="left:1.5px;top:494.2px;" width="6" height="8" viewBox="0 0 6 8"><path d="M1.5 0.8 L4.6 4 L1.5 7.2" fill="none" stroke="#8a8a8a" stroke-width="1.3"/></svg>
<svg class="r" style="left:12.5px;top:489.3px;" width="16" height="15" viewBox="0 0 16 15"><path d="M1.5 3.8 L5 3.8 L6 4.8 L10 4.8 L10 11 L1.5 11 Z" fill="#fbf0cc" stroke="#a89a70" stroke-width="0.8"/><path d="M3.5 7.3 L15 7.3 L12.5 12.3 L1.5 12.3 Z" fill="#a6c8f0" stroke="#3a6ab0" stroke-width="0.9"/><text x="6.2" y="4.1" font-size="4.8" font-family="Liberation Sans" fill="#2a3f7a">CCS</text></svg>
<div class="t" style="left:32.0px;top:489.1px;font-size:10.5px;color:#1e1e1e;">cla_asin_cpu01</div>
<svg class="r" style="left:1.5px;top:510.6px;" width="6" height="8" viewBox="0 0 6 8"><path d="M1.5 0.8 L4.6 4 L1.5 7.2" fill="none" stroke="#8a8a8a" stroke-width="1.3"/></svg>
<svg class="r" style="left:12.5px;top:505.8px;" width="16" height="15" viewBox="0 0 16 15"><path d="M1.5 3.8 L5 3.8 L6 4.8 L10 4.8 L10 11 L1.5 11 Z" fill="#fbf0cc" stroke="#a89a70" stroke-width="0.8"/><path d="M3.5 7.3 L15 7.3 L12.5 12.3 L1.5 12.3 Z" fill="#a6c8f0" stroke="#3a6ab0" stroke-width="0.9"/><text x="6.2" y="4.1" font-size="4.8" font-family="Liberation Sans" fill="#2a3f7a">CCS</text><rect x="0.8" y="9" width="4.2" height="4" fill="#e8c058" stroke="#a0782a" stroke-width="0.6"/><path d="M1.7 9 V7.8 a1.2 1.2 0 0 1 2.4 0 V9" fill="none" stroke="#a0782a" stroke-width="0.6"/></svg>
<div class="t" style="left:32.0px;top:505.5px;font-size:10.5px;color:#1e1e1e;">CNAP_TMS320F280049</div>
<svg class="r" style="left:1.5px;top:527.1px;" width="6" height="8" viewBox="0 0 6 8"><path d="M1.5 0.8 L4.6 4 L1.5 7.2" fill="none" stroke="#8a8a8a" stroke-width="1.3"/></svg>
<svg class="r" style="left:12.5px;top:522.2px;" width="16" height="15" viewBox="0 0 16 15"><path d="M1.5 3.8 L5 3.8 L6 4.8 L10 4.8 L10 11 L1.5 11 Z" fill="#fbf0cc" stroke="#a89a70" stroke-width="0.8"/><path d="M3.5 7.3 L15 7.3 L12.5 12.3 L1.5 12.3 Z" fill="#a6c8f0" stroke="#3a6ab0" stroke-width="0.9"/><text x="6.2" y="4.1" font-size="4.8" font-family="Liberation Sans" fill="#2a3f7a">CCS</text><rect x="0.8" y="9" width="4.2" height="4" fill="#e8c058" stroke="#a0782a" stroke-width="0.6"/><path d="M1.7 9 V7.8 a1.2 1.2 0 0 1 2.4 0 V9" fill="none" stroke="#a0782a" stroke-width="0.6"/></svg>
<div class="t" style="left:32.0px;top:521.9px;font-size:10.5px;color:#1e1e1e;">CtrlBoardTest</div>
<svg class="r" style="left:1.5px;top:543.5px;" width="6" height="8" viewBox="0 0 6 8"><path d="M1.5 0.8 L4.6 4 L1.5 7.2" fill="none" stroke="#8a8a8a" stroke-width="1.3"/></svg>
<svg class="r" style="left:12.5px;top:538.6px;" width="16" height="15" viewBox="0 0 16 15"><path d="M1.5 3.8 L5 3.8 L6 4.8 L10 4.8 L10 11 L1.5 11 Z" fill="#fbf0cc" stroke="#a89a70" stroke-width="0.8"/><path d="M3.5 7.3 L15 7.3 L12.5 12.3 L1.5 12.3 Z" fill="#a6c8f0" stroke="#3a6ab0" stroke-width="0.9"/><text x="6.2" y="4.1" font-size="4.8" font-family="Liberation Sans" fill="#2a3f7a">CCS</text></svg>
<div class="t" style="left:32.0px;top:538.3px;font-size:10.5px;color:#1e1e1e;">Example_2803xAdc_Offset_Look_Up_Table</div>
<svg class="r" style="left:1.5px;top:559.9px;" width="6" height="8" viewBox="0 0 6 8"><path d="M1.5 0.8 L4.6 4 L1.5 7.2" fill="none" stroke="#8a8a8a" stroke-width="1.3"/></svg>
<svg class="r" style="left:12.5px;top:555.0px;" width="16" height="15" viewBox="0 0 16 15"><path d="M1.5 3.8 L5 3.8 L6 4.8 L10 4.8 L10 11 L1.5 11 Z" fill="#fbf0cc" stroke="#a89a70" stroke-width="0.8"/><path d="M3.5 7.3 L15 7.3 L12.5 12.3 L1.5 12.3 Z" fill="#a6c8f0" stroke="#3a6ab0" stroke-width="0.9"/><text x="6.2" y="4.1" font-size="4.8" font-family="Liberation Sans" fill="#2a3f7a">CCS</text></svg>
<div class="t" style="left:32.0px;top:554.7px;font-size:10.5px;color:#1e1e1e;">Example_2803xAdc_Periodic_Offset_Calibration</div>
<svg class="r" style="left:1.5px;top:576.3px;" width="6" height="8" viewBox="0 0 6 8"><path d="M1.5 0.8 L4.6 4 L1.5 7.2" fill="none" stroke="#8a8a8a" stroke-width="1.3"/></svg>
<svg class="r" style="left:12.5px;top:571.4px;" width="16" height="15" viewBox="0 0 16 15"><path d="M1.5 3.8 L5 3.8 L6 4.8 L10 4.8 L10 11 L1.5 11 Z" fill="#fbf0cc" stroke="#a89a70" stroke-width="0.8"/><path d="M3.5 7.3 L15 7.3 L12.5 12.3 L1.5 12.3 Z" fill="#a6c8f0" stroke="#3a6ab0" stroke-width="0.9"/><text x="9.3" y="5.6" font-size="7" font-family="Liberation Sans" fill="#2a3f7a" font-weight="bold">C</text></svg>
<div class="t" style="left:32.0px;top:571.2px;font-size:10.5px;color:#1e1e1e;">Example_2803xLina_EXALB</div>
<svg class="r" style="left:1.5px;top:592.7px;" width="6" height="8" viewBox="0 0 6 8"><path d="M1.5 0.8 L4.6 4 L1.5 7.2" fill="none" stroke="#8a8a8a" stroke-width="1.3"/></svg>
<svg class="r" style="left:12.5px;top:587.8px;" width="16" height="15" viewBox="0 0 16 15"><path d="M1.5 3.8 L5 3.8 L6 4.8 L10 4.8 L10 11 L1.5 11 Z" fill="#fbf0cc" stroke="#a89a70" stroke-width="0.8"/><path d="M3.5 7.3 L15 7.3 L12.5 12.3 L1.5 12.3 Z" fill="#a6c8f0" stroke="#3a6ab0" stroke-width="0.9"/><text x="9.3" y="5.6" font-size="7" font-family="Liberation Sans" fill="#2a3f7a" font-weight="bold">C</text><rect x="0.8" y="9" width="4.2" height="4" fill="#e8c058" stroke="#a0782a" stroke-width="0.6"/><path d="M1.7 9 V7.8 a1.2 1.2 0 0 1 2.4 0 V9" fill="none" stroke="#a0782a" stroke-width="0.6"/></svg>
<div class="t" style="left:32.0px;top:587.6px;font-size:10.5px;color:#1e1e1e;">Example_2833xAdcSoc</div>
<div class="r" style="left:314.5px;top:69px;width:367px;height:284.5px;border:1px solid #dcdcdc;border-radius:3px;background:#fff;box-sizing:border-box;"></div>
<div class="r" style="left:315.5px;top:70.0px;width:365.0px;height:22.5px;background:#f3f3f3;"></div>
<div class="r" style="left:315.5px;top:70.0px;width:76.0px;height:22.5px;background:#ffffff;"></div>
<div class="r" style="left:391.3px;top:70.0px;width:1.0px;height:22.5px;background:#e6e6e6;"></div>
<svg class="r" style="left:319.5px;top:75.5px;" width="14" height="14" viewBox="0 0 14 14"><ellipse cx="7" cy="7.5" rx="3.8" ry="4.6" fill="#8ad0b0" stroke="#2a6a4a" stroke-width="1"/><path d="M7 1 V14 M1 3.5 L3.8 5.5 M13 3.5 L10.2 5.5 M0.5 7.5 H3.2 M13.5 7.5 H10.8 M1 12 L3.8 10 M13 12 L10.2 10" stroke="#2a6a4a" stroke-width="1"/></svg>
<div class="t" style="left:336.7px;top:75.1px;font-size:10.6px;color:#1e1e1e;">Debug</div>
<svg class="r" style="left:375.5px;top:76.8px;" width="10" height="10" viewBox="0 0 10 10"><path d="M1.8 1.8 L8.2 8.2 M8.2 1.8 L1.8 8.2" stroke="#8a8a8a" stroke-width="3.2" stroke-linecap="round"/><path d="M1.8 1.8 L8.2 8.2 M8.2 1.8 L1.8 8.2" stroke="#fff" stroke-width="1.3" stroke-linecap="round"/></svg>
<svg class="r" style="left:572.5px;top:75.0px;" width="14" height="14" viewBox="0 0 14 14"><rect x="2.5" y="0.5" width="10" height="10" fill="#e8eef6" stroke="#9aaac0" stroke-width="0.9"/><rect x="0.5" y="2.5" width="10" height="10" fill="#dfe8f4" stroke="#5a7aa8" stroke-width="1"/><path d="M3 7.5 L8 7.5" stroke="#1a2a4a" stroke-width="1.5"/></svg>
<svg class="r" style="left:592.5px;top:74.5px;" width="15" height="14" viewBox="0 0 15 14"><path d="M2 2 L12 12 M12 2 L2 12" stroke="#c4c4c4" stroke-width="3"/><rect x="6" y="5" width="7" height="7" fill="#d8d8d8"/></svg>
<svg class="r" style="left:620.5px;top:75.0px;" width="6" height="13" viewBox="0 0 6 13"><circle cx="3" cy="2.2" r="1.7" fill="none" stroke="#666" stroke-width="1"/><circle cx="3" cy="6.5" r="1.7" fill="none" stroke="#666" stroke-width="1"/><circle cx="3" cy="10.8" r="1.7" fill="none" stroke="#666" stroke-width="1"/></svg>
<svg class="r" style="left:638.5px;top:76.5px;" width="11" height="5" viewBox="0 0 11 5"><rect x="0.6" y="0.6" width="9.4" height="3" rx="0.8" fill="#fff" stroke="#707070" stroke-width="1.1"/></svg>
<svg class="r" style="left:659.5px;top:76.5px;" width="10" height="10" viewBox="0 0 10 10"><rect x="0.6" y="0.6" width="8.8" height="8.6" fill="#fff" stroke="#707070" stroke-width="1.1"/><rect x="0.6" y="0.6" width="8.8" height="2" fill="#8a8a8a"/></svg>
<div class="r" style="left:315.5px;top:92.5px;width:365px;height:245px;overflow:hidden;">
<svg class="r" style="left:6.2px;top:6.9px;" width="8" height="6" viewBox="0 0 8 6"><path d="M0.8 1.2 L4 4.4 L7.2 1.2" fill="none" stroke="#333" stroke-width="1.3"/></svg>
<svg class="r" style="left:17.5px;top:1.3px;" width="15" height="14" viewBox="0 0 15 14"><path d="M1 4 L7.5 1 L14 4 L14 11 L7.5 14 L1 11 Z" fill="#d0d0d0" stroke="#6a6a6a" stroke-width="0.8"/><path d="M1 4 L7.5 7 L14 4 M7.5 7 V14" stroke="#8a8a8a" stroke-width="0.7" fill="none"/><path d="M7.5 7 L14 4 L14 11 L7.5 14 Z" fill="#b8b8b8"/><circle cx="7.5" cy="3.8" r="1.3" fill="#111"/><circle cx="4" cy="8.8" r="1.3" fill="#111"/><circle cx="11" cy="8.8" r="1.3" fill="#111"/></svg>
<div class="t" style="left:36.2px;top:2.2px;font-size:10.5px;color:#1e1e1e;transform:scaleX(1.04);transform-origin:0 0;">280049c.ccxml [Code Composer Studio - Device Debugging]</div>
<svg class="r" style="left:20.7px;top:23.3px;" width="8" height="6" viewBox="0 0 8 6"><path d="M0.8 1.2 L4 4.4 L7.2 1.2" fill="none" stroke="#333" stroke-width="1.3"/></svg>
<svg class="r" style="left:32.9px;top:17.7px;" width="14" height="14" viewBox="0 0 14 14"><rect x="0.5" y="8" width="3" height="5.5" fill="#e8c050" stroke="#a08030" stroke-width="0.6"/><rect x="4" y="6" width="3" height="7.5" fill="#e8c050" stroke="#a08030" stroke-width="0.6"/><circle cx="10" cy="5" r="3.8" fill="#f0c060" stroke="#a07020" stroke-width="0.8"/><circle cx="10" cy="5" r="1.5" fill="#d04a20"/></svg>
<div class="t" style="left:51.7px;top:18.6px;font-size:10.5px;color:#1e1e1e;transform:scaleX(0.98);transform-origin:0 0;">Texas Instruments XDS110 USB Debug Probe_0/C28xx_CPU1 (Suspended)</div>
<div class="r" style="left:44.9px;top:33.3px;width:286.3px;height:16.6px;background:#d9d9d9;"></div>
<svg class="r" style="left:48.5px;top:36.9px;" width="12" height="12" viewBox="0 0 12 12"><path d="M0.5 1.5 H11 M0.5 5 H11 M0.5 8.5 H11" stroke="#2a62b0" stroke-width="1.9"/></svg>
<div class="t" style="left:66.5px;top:35.0px;font-size:10.5px;color:#1e1e1e;transform:scaleX(0.985);transform-origin:0 0;">canbISR() at can_ex3_external_transmit.c:305 0x008630</div>
<svg class="r" style="left:48.5px;top:53.3px;" width="12" height="12" viewBox="0 0 12 12"><path d="M0.5 1.5 H11 M0.5 5 H11 M0.5 8.5 H11" stroke="#2a62b0" stroke-width="1.9"/></svg>
<div class="t" style="left:66.5px;top:51.4px;font-size:10.5px;color:#1e1e1e;transform:scaleX(1.0);transform-origin:0 0;">main() at can_ex3_external_transmit.c:256 0x00818C</div>
<svg class="r" style="left:48.5px;top:69.7px;" width="12" height="12" viewBox="0 0 12 12"><path d="M0.5 1.5 H11 M0.5 5 H11 M0.5 8.5 H11" stroke="#2a62b0" stroke-width="1.9"/></svg>
<div class="t" style="left:66.5px;top:67.8px;font-size:10.5px;color:#1e1e1e;transform:scaleX(1.0);transform-origin:0 0;">0x000004  (no symbols are defined)</div>
<svg class="r" style="left:30.5px;top:83.3px;" width="16" height="15" viewBox="0 0 16 15"><path d="M0.5 8.5 L6.5 14.5 M6.5 8.5 L0.5 14.5" stroke="#5a3a30" stroke-width="1.1"/><path d="M3 11 L9 6" stroke="#777" stroke-width="0.8"/><circle cx="11" cy="5" r="3.8" fill="#f0c060" stroke="#a07020" stroke-width="0.8"/><circle cx="11" cy="5" r="1.5" fill="#d04a20"/></svg>
<div class="t" style="left:51.7px;top:84.2px;font-size:10.5px;color:#1e1e1e;transform:scaleX(0.98);transform-origin:0 0;">Texas Instruments XDS110 USB Debug Probe_0/CLA1_0 (Disconnected : Unknown)</div>
</div>
<div class="r" style="left:315.5px;top:337.5px;width:365.0px;height:14.5px;background:#f0f0f0;"></div>
<svg class="r" style="left:320.5px;top:340.0px;" width="6" height="9" viewBox="0 0 6 9"><path d="M5 1 L1.5 4.5 L5 8" fill="none" stroke="#555" stroke-width="1.5"/></svg>
<div class="r" style="left:331.0px;top:337.5px;width:169.0px;height:14.0px;background:#cdcdcd;"></div>
<svg class="r" style="left:669.5px;top:340.0px;" width="6" height="9" viewBox="0 0 6 9"><path d="M1 1 L4.5 4.5 L1 8" fill="none" stroke="#555" stroke-width="1.5"/></svg>
<div class="r" style="left:680.5px;top:92.5px;width:1.0px;height:245.0px;background:#e8e8e8;"></div>
<div class="r" style="left:685.6px;top:69px;width:550px;height:284.5px;border:1px solid #dcdcdc;border-radius:3px;background:#fff;box-sizing:border-box;"></div>
<div class="r" style="left:686.6px;top:70px;width:545px;height:22px;background:linear-gradient(#e6ecf8,#dde3f0);border-bottom:1px solid #d0d4de;box-sizing:border-box;"></div>
<div class="r" style="left:686.6px;top:70.0px;width:83.0px;height:21.0px;background:rgba(200,210,230,0.15);"></div>
<div class="r" style="left:769.3px;top:70.0px;width:89.0px;height:22.5px;background:#ffffff;"></div>
<svg class="r" style="left:689.5px;top:75.0px;" width="16" height="14" viewBox="0 0 16 14"><circle cx="4" cy="8" r="2.6" fill="none" stroke="#555" stroke-width="0.9"/><circle cx="10" cy="8" r="2.6" fill="none" stroke="#555" stroke-width="0.9"/><path d="M6.6 8 H7.4 M1.5 8 C2 3 5 2 6 2 M14 4 C12 3 11 4 12.5 5.5" fill="none" stroke="#555" stroke-width="0.9"/><text x="4" y="14" font-size="4" fill="#555" font-family="Liberation Sans">x=</text></svg>
<div class="t" style="left:708.3px;top:75.2px;font-size:10.5px;color:#1e1e1e;transform:scaleX(0.95);transform-origin:0 0;">Expressions</div>
<svg class="r" style="left:773.4px;top:75.5px;" width="14" height="12" viewBox="0 0 14 12"><text x="0" y="5.2" font-size="6.3" font-family="Liberation Mono" fill="#505050" letter-spacing="-0.3">1010</text><text x="0" y="10.8" font-size="6.3" font-family="Liberation Mono" fill="#505050" letter-spacing="-0.3">0101</text></svg>
<div class="t" style="left:791.3px;top:75.2px;font-size:10.5px;color:#1e1e1e;transform:scaleX(0.935);transform-origin:0 0;">Registers</div>
<svg class="r" style="left:841.0px;top:76.8px;" width="10" height="10" viewBox="0 0 10 10"><path d="M1.8 1.8 L8.2 8.2 M8.2 1.8 L1.8 8.2" stroke="#8a8a8a" stroke-width="3.2" stroke-linecap="round"/><path d="M1.8 1.8 L8.2 8.2 M8.2 1.8 L1.8 8.2" stroke="#fff" stroke-width="1.3" stroke-linecap="round"/></svg>
<svg class="r" style="left:1050.0px;top:75.0px;" width="14" height="14" viewBox="0 0 14 14"><rect x="2.5" y="0.5" width="10" height="10" fill="#e8eef6" stroke="#9aaac0" stroke-width="0.9"/><rect x="0.5" y="2.5" width="10" height="10" fill="#dfe8f4" stroke="#5a7aa8" stroke-width="1"/><path d="M3 7.5 L8 7.5" stroke="#1a2a4a" stroke-width="1.5"/></svg>
<div class="r" style="left:1069.0px;top:73.5px;width:1.0px;height:15.0px;background:#9aa0aa;"></div>
<svg class="r" style="left:1076.3px;top:74.5px;" width="16" height="14" viewBox="0 0 16 14"><path d="M2 7 L2 3 L7 3 L7 1 L10 4.5 L7 8 L7 6 L5 6 L5 7 Z" fill="#f0c848" stroke="#b08a20" stroke-width="0.7"/><path d="M14 7 L14 11 L9 11 L9 13 L6 9.5 L9 6 L9 8 L11 8 L11 7 Z" fill="#f0c848" stroke="#b08a20" stroke-width="0.7"/></svg>
<div class="r" style="left:1097.5px;top:73.5px;width:1.0px;height:15.0px;background:#9aa0aa;"></div>
<svg class="r" style="left:1105.6px;top:75.0px;" width="14" height="13" viewBox="0 0 14 13"><rect x="0.5" y="1.5" width="12" height="11" fill="#fbf6e4" stroke="#7a8aa0" stroke-width="0.9"/><rect x="0.5" y="1.5" width="12" height="2.5" fill="#5a8ac0"/><path d="M9 8 V2 M7 4 L9 1 L11 4" stroke="#e0a830" stroke-width="1.2" fill="none"/></svg>
<svg class="r" style="left:1127.6px;top:75.0px;" width="14" height="13" viewBox="0 0 14 13"><rect x="0.5" y="2" width="11" height="10.5" fill="#f0f4f8" stroke="#7a8aa0" stroke-width="0.9"/><rect x="0.5" y="2" width="11" height="2.5" fill="#5a8ac0"/><path d="M6 9 L12 2" stroke="#333" stroke-width="1.4"/></svg>
<svg class="r" style="left:1148.0px;top:74.5px;" width="15" height="14" viewBox="0 0 15 14"><path d="M2 8 C2 3 8 2 11 4 L12 2 L13 7 L8 6.5 L10 5.5 C8 4 4 5 4 8 Z" fill="#f0c848" stroke="#b08a20" stroke-width="0.6"/><path d="M13 6 C13 11 7 12 4 10 L3 12 L2 7 L7 7.5 L5 8.5 C7 10 11 9 11 6 Z" fill="#f0c848" stroke="#b08a20" stroke-width="0.6"/></svg>
<svg class="r" style="left:1175.0px;top:75.0px;" width="6" height="13" viewBox="0 0 6 13"><circle cx="3" cy="2.2" r="1.7" fill="none" stroke="#666" stroke-width="1"/><circle cx="3" cy="6.5" r="1.7" fill="none" stroke="#666" stroke-width="1"/><circle cx="3" cy="10.8" r="1.7" fill="none" stroke="#666" stroke-width="1"/></svg>
<svg class="r" style="left:1193.5px;top:76.5px;" width="11" height="5" viewBox="0 0 11 5"><rect x="0.6" y="0.6" width="9.4" height="3" rx="0.8" fill="#fff" stroke="#707070" stroke-width="1.1"/></svg>
<svg class="r" style="left:1215.0px;top:76.5px;" width="10" height="10" viewBox="0 0 10 10"><rect x="0.6" y="0.6" width="8.8" height="8.6" fill="#fff" stroke="#707070" stroke-width="1.1"/><rect x="0.6" y="0.6" width="8.8" height="2" fill="#8a8a8a"/></svg>
<div class="r" style="left:686.6px;top:92.0px;width:533.4px;height:23.4px;background:#ffffff;"></div>
<div class="t" style="left:692.9px;top:97.4px;font-size:10.9px;color:#1e1e1e;">Name</div>
<div class="t" style="left:847.4px;top:97.5px;font-size:10.6px;color:#1e1e1e;">Value</div>
<div class="t" style="left:962.0px;top:97.5px;font-size:10.6px;color:#1e1e1e;">Description</div>
<div class="r" style="left:840.3px;top:92.0px;width:1.0px;height:261.0px;background:#ececec;"></div>
<div class="r" style="left:955.6px;top:92.0px;width:1.0px;height:261.0px;background:#ececec;"></div>
<div class="r" style="left:1207.2px;top:92.0px;width:1.0px;height:261.0px;background:#ececec;"></div>
<div class="r" style="left:686.6px;top:115.4px;width:533.4px;height:237px;overflow:hidden;">
<div class="r" style="left:0.0px;top:15.4px;width:533.4px;height:1.0px;background:#ebebeb;"></div>
<svg class="r" style="left:6.9px;top:6.3px;" width="6" height="8" viewBox="0 0 6 8"><path d="M1.5 0.8 L4.6 4 L1.5 7.2" fill="none" stroke="#8a8a8a" stroke-width="1.3"/></svg>
<svg class="r" style="left:18.4px;top:1.5px;" width="14" height="13" viewBox="0 0 14 13"><circle cx="2.5" cy="2" r="1.6" fill="#5a8ac8"/><path d="M0.5 6.5 L1.0 3.8 L4.0 3.8 L4.5 6.5 Z" fill="#5a8ac8"/><circle cx="7" cy="2" r="1.6" fill="#e8c040"/><path d="M5 6.5 L5.5 3.8 L8.5 3.8 L9 6.5 Z" fill="#e8c040"/><circle cx="11.5" cy="2" r="1.6" fill="#5a8ac8"/><path d="M9.5 6.5 L10.0 3.8 L13.0 3.8 L13.5 6.5 Z" fill="#5a8ac8"/><text x="0" y="12.5" font-size="6.3" font-family="Liberation Mono" fill="#505050" letter-spacing="-0.3">0101</text></svg>
<div class="t" style="left:37.4px;top:1.2px;font-size:10.5px;color:#1e1e1e;transform:scaleX(0.98);transform-origin:0 0;">AdcbRegs</div>
<div class="t" style="left:274.9px;top:1.1px;font-size:10.7px;color:#1e1e1e;">ADC Registers</div>
<div class="r" style="left:0.0px;top:31.9px;width:533.4px;height:1.0px;background:#ebebeb;"></div>
<svg class="r" style="left:6.9px;top:22.8px;" width="6" height="8" viewBox="0 0 6 8"><path d="M1.5 0.8 L4.6 4 L1.5 7.2" fill="none" stroke="#8a8a8a" stroke-width="1.3"/></svg>
<svg class="r" style="left:18.4px;top:17.9px;" width="14" height="13" viewBox="0 0 14 13"><circle cx="2.5" cy="2" r="1.6" fill="#5a8ac8"/><path d="M0.5 6.5 L1.0 3.8 L4.0 3.8 L4.5 6.5 Z" fill="#5a8ac8"/><circle cx="7" cy="2" r="1.6" fill="#e8c040"/><path d="M5 6.5 L5.5 3.8 L8.5 3.8 L9 6.5 Z" fill="#e8c040"/><circle cx="11.5" cy="2" r="1.6" fill="#5a8ac8"/><path d="M9.5 6.5 L10.0 3.8 L13.0 3.8 L13.5 6.5 Z" fill="#5a8ac8"/><text x="0" y="12.5" font-size="6.3" font-family="Liberation Mono" fill="#505050" letter-spacing="-0.3">0101</text></svg>
<div class="t" style="left:37.4px;top:17.6px;font-size:10.5px;color:#1e1e1e;transform:scaleX(0.98);transform-origin:0 0;">AdccRegs</div>
<div class="t" style="left:274.9px;top:17.5px;font-size:10.7px;color:#1e1e1e;">ADC Registers</div>
<div class="r" style="left:0.0px;top:48.3px;width:533.4px;height:1.0px;background:#ebebeb;"></div>
<svg class="r" style="left:6.9px;top:39.2px;" width="6" height="8" viewBox="0 0 6 8"><path d="M1.5 0.8 L4.6 4 L1.5 7.2" fill="none" stroke="#8a8a8a" stroke-width="1.3"/></svg>
<svg class="r" style="left:18.4px;top:34.4px;" width="14" height="13" viewBox="0 0 14 13"><circle cx="2.5" cy="2" r="1.6" fill="#5a8ac8"/><path d="M0.5 6.5 L1.0 3.8 L4.0 3.8 L4.5 6.5 Z" fill="#5a8ac8"/><circle cx="7" cy="2" r="1.6" fill="#e8c040"/><path d="M5 6.5 L5.5 3.8 L8.5 3.8 L9 6.5 Z" fill="#e8c040"/><circle cx="11.5" cy="2" r="1.6" fill="#5a8ac8"/><path d="M9.5 6.5 L10.0 3.8 L13.0 3.8 L13.5 6.5 Z" fill="#5a8ac8"/><text x="0" y="12.5" font-size="6.3" font-family="Liberation Mono" fill="#505050" letter-spacing="-0.3">0101</text></svg>
<div class="t" style="left:37.4px;top:34.1px;font-size:10.5px;color:#1e1e1e;transform:scaleX(0.98);transform-origin:0 0;">AnalogSubsysRegs</div>
<div class="t" style="left:274.9px;top:34.0px;font-size:10.7px;color:#1e1e1e;">ANALOG SUBSYS Registers</div>
<div class="r" style="left:0.0px;top:64.8px;width:533.4px;height:1.0px;background:#ebebeb;"></div>
<svg class="r" style="left:6.9px;top:55.7px;" width="6" height="8" viewBox="0 0 6 8"><path d="M1.5 0.8 L4.6 4 L1.5 7.2" fill="none" stroke="#8a8a8a" stroke-width="1.3"/></svg>
<svg class="r" style="left:18.4px;top:50.8px;" width="14" height="13" viewBox="0 0 14 13"><circle cx="2.5" cy="2" r="1.6" fill="#5a8ac8"/><path d="M0.5 6.5 L1.0 3.8 L4.0 3.8 L4.5 6.5 Z" fill="#5a8ac8"/><circle cx="7" cy="2" r="1.6" fill="#e8c040"/><path d="M5 6.5 L5.5 3.8 L8.5 3.8 L9 6.5 Z" fill="#e8c040"/><circle cx="11.5" cy="2" r="1.6" fill="#5a8ac8"/><path d="M9.5 6.5 L10.0 3.8 L13.0 3.8 L13.5 6.5 Z" fill="#5a8ac8"/><text x="0" y="12.5" font-size="6.3" font-family="Liberation Mono" fill="#505050" letter-spacing="-0.3">0101</text></svg>
<div class="t" style="left:37.4px;top:50.5px;font-size:10.5px;color:#1e1e1e;transform:scaleX(0.98);transform-origin:0 0;">CanaRegs</div>
<div class="t" style="left:274.9px;top:50.4px;font-size:10.7px;color:#1e1e1e;">CAN Registers</div>
<div class="r" style="left:0.0px;top:81.2px;width:533.4px;height:1.0px;background:#ebebeb;"></div>
<svg class="r" style="left:5.4px;top:71.4px;" width="8" height="6" viewBox="0 0 8 6"><path d="M0.8 1.2 L4 4.4 L7.2 1.2" fill="none" stroke="#333" stroke-width="1.3"/></svg>
<svg class="r" style="left:18.4px;top:67.3px;" width="14" height="13" viewBox="0 0 14 13"><circle cx="2.5" cy="2" r="1.6" fill="#5a8ac8"/><path d="M0.5 6.5 L1.0 3.8 L4.0 3.8 L4.5 6.5 Z" fill="#5a8ac8"/><circle cx="7" cy="2" r="1.6" fill="#e8c040"/><path d="M5 6.5 L5.5 3.8 L8.5 3.8 L9 6.5 Z" fill="#e8c040"/><circle cx="11.5" cy="2" r="1.6" fill="#5a8ac8"/><path d="M9.5 6.5 L10.0 3.8 L13.0 3.8 L13.5 6.5 Z" fill="#5a8ac8"/><text x="0" y="12.5" font-size="6.3" font-family="Liberation Mono" fill="#505050" letter-spacing="-0.3">0101</text></svg>
<div class="t" style="left:37.4px;top:67.0px;font-size:10.5px;color:#1e1e1e;transform:scaleX(0.98);transform-origin:0 0;">CanbRegs</div>
<div class="t" style="left:274.9px;top:66.9px;font-size:10.7px;color:#1e1e1e;">CAN Registers</div>
<div class="r" style="left:0.0px;top:97.7px;width:533.4px;height:1.0px;background:#ebebeb;"></div>
<svg class="r" style="left:21.9px;top:88.6px;" width="6" height="8" viewBox="0 0 6 8"><path d="M1.5 0.8 L4.6 4 L1.5 7.2" fill="none" stroke="#8a8a8a" stroke-width="1.3"/></svg>
<svg class="r" style="left:33.4px;top:84.8px;" width="14" height="12" viewBox="0 0 14 12"><text x="0" y="5.2" font-size="6.3" font-family="Liberation Mono" fill="#505050" letter-spacing="-0.3">1010</text><text x="0" y="10.8" font-size="6.3" font-family="Liberation Mono" fill="#505050" letter-spacing="-0.3">0101</text></svg>
<div class="t" style="left:52.4px;top:83.4px;font-size:10.5px;color:#1e1e1e;transform:scaleX(0.93);transform-origin:0 0;">CAN_CTL</div>
<div class="t" style="left:159.4px;top:83.4px;font-size:10.5px;color:#1e1e1e;transform:scaleX(0.93);transform-origin:0 0;">0x0001140E</div>
<div class="t" style="left:274.9px;top:83.3px;font-size:10.7px;color:#1e1e1e;">CAN Control Register [Memory Mapped]</div>
<div class="r" style="left:0.0px;top:114.1px;width:533.4px;height:1.0px;background:#ebebeb;"></div>
<svg class="r" style="left:21.9px;top:105.0px;" width="6" height="8" viewBox="0 0 6 8"><path d="M1.5 0.8 L4.6 4 L1.5 7.2" fill="none" stroke="#8a8a8a" stroke-width="1.3"/></svg>
<svg class="r" style="left:33.4px;top:101.2px;" width="14" height="12" viewBox="0 0 14 12"><text x="0" y="5.2" font-size="6.3" font-family="Liberation Mono" fill="#505050" letter-spacing="-0.3">1010</text><text x="0" y="10.8" font-size="6.3" font-family="Liberation Mono" fill="#505050" letter-spacing="-0.3">0101</text></svg>
<div class="t" style="left:52.4px;top:99.9px;font-size:10.5px;color:#1e1e1e;transform:scaleX(0.93);transform-origin:0 0;">CAN_ES</div>
<div class="t" style="left:159.4px;top:99.9px;font-size:10.5px;color:#1e1e1e;transform:scaleX(0.93);transform-origin:0 0;">0x00000062</div>
<div class="t" style="left:274.9px;top:99.8px;font-size:10.7px;color:#1e1e1e;">Error and Status Register [Memory Mapped]</div>
<div class="r" style="left:0.0px;top:130.6px;width:533.4px;height:1.0px;background:#ebebeb;"></div>
<svg class="r" style="left:21.9px;top:121.5px;" width="6" height="8" viewBox="0 0 6 8"><path d="M1.5 0.8 L4.6 4 L1.5 7.2" fill="none" stroke="#8a8a8a" stroke-width="1.3"/></svg>
<svg class="r" style="left:33.4px;top:117.7px;" width="14" height="12" viewBox="0 0 14 12"><text x="0" y="5.2" font-size="6.3" font-family="Liberation Mono" fill="#505050" letter-spacing="-0.3">1010</text><text x="0" y="10.8" font-size="6.3" font-family="Liberation Mono" fill="#505050" letter-spacing="-0.3">0101</text></svg>
<div class="t" style="left:52.4px;top:116.3px;font-size:10.5px;color:#1e1e1e;transform:scaleX(0.93);transform-origin:0 0;">CAN_ERRC</div>
<div class="t" style="left:159.4px;top:116.3px;font-size:10.5px;color:#1e1e1e;transform:scaleX(0.93);transform-origin:0 0;">0x0000F900</div>
<div class="t" style="left:274.9px;top:116.2px;font-size:10.7px;color:#1e1e1e;">Error Counter Register [Memory Mapped]</div>
<div class="r" style="left:0.0px;top:147.0px;width:533.4px;height:1.0px;background:#ebebeb;"></div>
<svg class="r" style="left:21.9px;top:137.9px;" width="6" height="8" viewBox="0 0 6 8"><path d="M1.5 0.8 L4.6 4 L1.5 7.2" fill="none" stroke="#8a8a8a" stroke-width="1.3"/></svg>
<svg class="r" style="left:33.4px;top:134.1px;" width="14" height="12" viewBox="0 0 14 12"><text x="0" y="5.2" font-size="6.3" font-family="Liberation Mono" fill="#505050" letter-spacing="-0.3">1010</text><text x="0" y="10.8" font-size="6.3" font-family="Liberation Mono" fill="#505050" letter-spacing="-0.3">0101</text></svg>
<div class="t" style="left:52.4px;top:132.8px;font-size:10.5px;color:#1e1e1e;transform:scaleX(0.93);transform-origin:0 0;">CAN_BTR</div>
<div class="t" style="left:159.4px;top:132.8px;font-size:10.5px;color:#1e1e1e;transform:scaleX(0.93);transform-origin:0 0;">0x00007AC9</div>
<div class="t" style="left:274.9px;top:132.7px;font-size:10.7px;color:#1e1e1e;">Bit Timing Register [Memory Mapped]</div>
<div class="r" style="left:0.0px;top:163.5px;width:533.4px;height:1.0px;background:#ebebeb;"></div>
<svg class="r" style="left:20.4px;top:153.7px;" width="8" height="6" viewBox="0 0 8 6"><path d="M0.8 1.2 L4 4.4 L7.2 1.2" fill="none" stroke="#333" stroke-width="1.3"/></svg>
<svg class="r" style="left:33.4px;top:150.5px;" width="14" height="12" viewBox="0 0 14 12"><text x="0" y="5.2" font-size="6.3" font-family="Liberation Mono" fill="#505050" letter-spacing="-0.3">1010</text><text x="0" y="10.8" font-size="6.3" font-family="Liberation Mono" fill="#505050" letter-spacing="-0.3">0101</text></svg>
<div class="t" style="left:52.4px;top:149.2px;font-size:10.5px;color:#1e1e1e;transform:scaleX(0.93);transform-origin:0 0;">CAN_INT</div>
<div class="t" style="left:159.4px;top:149.2px;font-size:10.5px;color:#1e1e1e;transform:scaleX(0.93);transform-origin:0 0;">0x00008000</div>
<div class="t" style="left:274.9px;top:149.1px;font-size:10.7px;color:#1e1e1e;">Interrupt Register [Memory Mapped]</div>
<div class="r" style="left:0.0px;top:179.9px;width:533.4px;height:1.0px;background:#ebebeb;"></div>
<svg class="r" style="left:48.4px;top:167.0px;" width="14" height="12" viewBox="0 0 14 12"><text x="0" y="5.2" font-size="6.3" font-family="Liberation Mono" fill="#505050" letter-spacing="-0.3">1010</text><text x="0" y="10.8" font-size="6.3" font-family="Liberation Mono" fill="#505050" letter-spacing="-0.3">0101</text></svg>
<div class="t" style="left:67.4px;top:165.7px;font-size:10.5px;color:#1e1e1e;transform:scaleX(0.93);transform-origin:0 0;">INT1ID</div>
<div class="t" style="left:159.4px;top:165.7px;font-size:10.5px;color:#1e1e1e;transform:scaleX(0.93);transform-origin:0 0;">00000000</div>
<div class="t" style="left:274.9px;top:165.6px;font-size:10.7px;color:#1e1e1e;">Interrupt 1 Identifier</div>
<div class="r" style="left:0.0px;top:181.5px;width:533.4px;height:15.0px;background:#d9d9d9;"></div>
<div class="r" style="left:153.7px;top:181.5px;width:1.0px;height:15.0px;background:#ffffff;"></div>
<div class="r" style="left:269.0px;top:181.5px;width:1.0px;height:15.0px;background:#ffffff;"></div>
<div class="r" style="left:520.6px;top:181.5px;width:1.0px;height:15.0px;background:#ffffff;"></div>
<div class="r" style="left:0.0px;top:196.4px;width:533.4px;height:1.0px;background:#ebebeb;"></div>
<svg class="r" style="left:48.4px;top:183.5px;" width="14" height="12" viewBox="0 0 14 12"><text x="0" y="5.2" font-size="6.3" font-family="Liberation Mono" fill="#505050" letter-spacing="-0.3">1010</text><text x="0" y="10.8" font-size="6.3" font-family="Liberation Mono" fill="#505050" letter-spacing="-0.3">0101</text></svg>
<div class="t" style="left:67.4px;top:182.1px;font-size:10.5px;color:#1e1e1e;transform:scaleX(0.93);transform-origin:0 0;">INT0ID</div>
<div class="t" style="left:159.4px;top:182.1px;font-size:10.5px;color:#1e1e1e;transform:scaleX(0.93);transform-origin:0 0;">1000000000000000</div>
<div class="t" style="left:274.9px;top:182.0px;font-size:10.7px;color:#1e1e1e;">Interrupt Identifier</div>
<div class="r" style="left:0.0px;top:212.8px;width:533.4px;height:1.0px;background:#ebebeb;"></div>
<svg class="r" style="left:21.9px;top:203.7px;" width="6" height="8" viewBox="0 0 6 8"><path d="M1.5 0.8 L4.6 4 L1.5 7.2" fill="none" stroke="#8a8a8a" stroke-width="1.3"/></svg>
<svg class="r" style="left:33.4px;top:199.9px;" width="14" height="12" viewBox="0 0 14 12"><text x="0" y="5.2" font-size="6.3" font-family="Liberation Mono" fill="#505050" letter-spacing="-0.3">1010</text><text x="0" y="10.8" font-size="6.3" font-family="Liberation Mono" fill="#505050" letter-spacing="-0.3">0101</text></svg>
<div class="t" style="left:52.4px;top:198.6px;font-size:10.5px;color:#1e1e1e;transform:scaleX(0.93);transform-origin:0 0;">CAN_TEST</div>
<div class="t" style="left:159.4px;top:198.6px;font-size:10.5px;color:#1e1e1e;transform:scaleX(0.93);transform-origin:0 0;">0x00000080</div>
<div class="t" style="left:274.9px;top:198.5px;font-size:10.7px;color:#1e1e1e;">Test Register [Memory Mapped]</div>
<div class="r" style="left:0.0px;top:229.3px;width:533.4px;height:1.0px;background:#ebebeb;"></div>
<svg class="r" style="left:21.9px;top:220.2px;" width="6" height="8" viewBox="0 0 6 8"><path d="M1.5 0.8 L4.6 4 L1.5 7.2" fill="none" stroke="#8a8a8a" stroke-width="1.3"/></svg>
<svg class="r" style="left:33.4px;top:216.3px;" width="14" height="12" viewBox="0 0 14 12"><text x="0" y="5.2" font-size="6.3" font-family="Liberation Mono" fill="#505050" letter-spacing="-0.3">1010</text><text x="0" y="10.8" font-size="6.3" font-family="Liberation Mono" fill="#505050" letter-spacing="-0.3">0101</text></svg>
<div class="t" style="left:52.4px;top:215.0px;font-size:10.5px;color:#1e1e1e;transform:scaleX(0.93);transform-origin:0 0;">CAN_PERR</div>
<div class="t" style="left:159.4px;top:215.0px;font-size:10.5px;color:#1e1e1e;transform:scaleX(0.93);transform-origin:0 0;">0x00000000</div>
<div class="t" style="left:274.9px;top:214.9px;font-size:10.7px;color:#1e1e1e;">CAN Parity Error Code Register  [Memory Mapped]</div>
<div class="r" style="left:0.0px;top:245.7px;width:533.4px;height:1.0px;background:#ebebeb;"></div>
<svg class="r" style="left:21.9px;top:236.6px;" width="6" height="8" viewBox="0 0 6 8"><path d="M1.5 0.8 L4.6 4 L1.5 7.2" fill="none" stroke="#8a8a8a" stroke-width="1.3"/></svg>
<svg class="r" style="left:33.4px;top:232.8px;" width="14" height="12" viewBox="0 0 14 12"><text x="0" y="5.2" font-size="6.3" font-family="Liberation Mono" fill="#505050" letter-spacing="-0.3">1010</text><text x="0" y="10.8" font-size="6.3" font-family="Liberation Mono" fill="#505050" letter-spacing="-0.3">0101</text></svg>
<div class="t" style="left:52.4px;top:231.5px;font-size:10.5px;color:#1e1e1e;transform:scaleX(0.93);transform-origin:0 0;">CAN_RAM_INIT</div>
<div class="t" style="left:159.4px;top:231.5px;font-size:10.5px;color:#1e1e1e;transform:scaleX(0.93);transform-origin:0 0;">0x00000025</div>
<div class="t" style="left:274.9px;top:231.4px;font-size:10.7px;color:#1e1e1e;">CAN RAM Initialization Register [Memory Mapped]</div>
</div>
<div class="r" style="left:1220.0px;top:92.5px;width:10.0px;height:260.0px;background:#f0f0f0;"></div>
<svg class="r" style="left:1220.5px;top:99.5px;" width="9" height="6" viewBox="0 0 9 6"><path d="M1 5 L4.5 1.5 L8 5" fill="none" stroke="#555" stroke-width="1.5"/></svg>
<div class="r" style="left:1220.0px;top:133.0px;width:10.0px;height:15.3px;background:#cdcdcd;"></div>
<svg class="r" style="left:1220.5px;top:341.0px;" width="9" height="6" viewBox="0 0 9 6"><path d="M1 1 L4.5 4.5 L8 1" fill="none" stroke="#555" stroke-width="1.5"/></svg>
<div class="r" style="left:316px;top:358px;width:920px;height:250px;border:1px solid #dcdcdc;border-radius:3px;background:#fff;box-sizing:border-box;"></div>
<div class="r" style="left:317.0px;top:359.0px;width:913.0px;height:22.5px;background:#f6f6f6;"></div>
<div class="r" style="left:317.0px;top:359.0px;width:113.0px;height:22.5px;background:#ffffff;"></div>
<div class="r" style="left:430.0px;top:359.0px;width:1.0px;height:22.5px;background:#e6e6e6;"></div>
<svg class="r" style="left:320.0px;top:364.0px;" width="16" height="15" viewBox="0 0 16 15"><path d="M2 1 L10 1 L13 4 L13 14 L2 14 Z" fill="#fff" stroke="#7a7a7a" stroke-width="0.9"/><text x="2.8" y="12" font-size="9.5" font-family="Liberation Sans" fill="#2a5aa0" font-weight="bold">.c</text></svg>
<div class="t" style="left:336.6px;top:362.9px;font-size:10.5px;color:#1e1e1e;transform:scaleX(0.95);transform-origin:0 0;">can_ex3_ext...</div>
<svg class="r" style="left:414.0px;top:367.0px;" width="10" height="10" viewBox="0 0 10 10"><path d="M1.8 1.8 L8.2 8.2 M8.2 1.8 L1.8 8.2" stroke="#8a8a8a" stroke-width="3.2" stroke-linecap="round"/><path d="M1.8 1.8 L8.2 8.2 M8.2 1.8 L1.8 8.2" stroke="#fff" stroke-width="1.3" stroke-linecap="round"/></svg>
<svg class="r" style="left:435.0px;top:364.0px;" width="16" height="15" viewBox="0 0 16 15"><path d="M3 1 L11 1 L13 3 L13 14 L3 14 Z" fill="#fff" stroke="#555" stroke-width="0.9"/><circle cx="8" cy="6" r="2.5" fill="none" stroke="#555" stroke-width="0.9"/><path d="M8 8 L8 12 M5 12 L11 12" stroke="#555" stroke-width="0.9"/></svg>
<div class="t" style="left:452.9px;top:363.2px;font-size:10.5px;color:#1e1e1e;transform:scaleX(0.95);transform-origin:0 0;">TMS320F2800...</div>
<svg class="r" style="left:558.5px;top:364.0px;" width="16" height="15" viewBox="0 0 16 15"><path d="M2 1 L10 1 L13 4 L13 14 L2 14 Z" fill="#fff" stroke="#7a7a7a" stroke-width="0.9"/><text x="2.8" y="12" font-size="9.5" font-family="Liberation Sans" fill="#2a5aa0" font-weight="bold">.c</text></svg>
<div class="t" style="left:576.0px;top:363.2px;font-size:10.5px;color:#1e1e1e;transform:scaleX(0.95);transform-origin:0 0;">cla_asin_cpu...</div>
<svg class="r" style="left:670.5px;top:364.0px;" width="16" height="15" viewBox="0 0 16 15"><path d="M2 1 L10 1 L13 4 L13 14 L2 14 Z" fill="#fff" stroke="#7a7a7a" stroke-width="0.9"/><text x="2.8" y="12" font-size="9.5" font-family="Liberation Sans" fill="#2a5aa0" font-weight="bold">.c</text></svg>
<div class="t" style="left:688.3px;top:363.2px;font-size:10.5px;color:#1e1e1e;transform:scaleX(0.95);transform-origin:0 0;">asin.cla</div>
<svg class="r" style="left:751.5px;top:363.0px;" width="15" height="15" viewBox="0 0 15 15"><rect x="2" y="4" width="11" height="10" fill="#eef4fa" stroke="#6a8aa0" stroke-width="0.9"/><path d="M0.5 4 L4 0.5 L8 4" fill="#f0d070" stroke="#b09030" stroke-width="0.7"/><text x="5" y="12.5" font-size="7.5" font-family="Liberation Sans" fill="#2a5a9a" font-weight="bold">h</text></svg>
<div class="t" style="left:769.8px;top:363.2px;font-size:10.5px;color:#1e1e1e;transform:scaleX(0.95);transform-origin:0 0;">F2837xD_devi...</div>
<svg class="r" style="left:869.5px;top:364.0px;" width="16" height="15" viewBox="0 0 16 15"><rect x="1.5" y="1.5" width="12" height="12" fill="#eef4fa" stroke="#5a7aa0" stroke-width="0.9"/><rect x="1.5" y="1.5" width="12" height="2.5" fill="#7aa0c8"/><text x="4.5" y="12" font-size="8" font-family="Liberation Sans" fill="#2a5a9a" font-weight="bold">c</text></svg>
<div class="t" style="left:887.8px;top:363.2px;font-size:10.5px;color:#1e1e1e;transform:scaleX(0.95);transform-origin:0 0;">CAN_sendMes...</div>
<svg class="r" style="left:997.5px;top:364.0px;" width="16" height="15" viewBox="0 0 16 15"><path d="M2 1 L10 1 L13 4 L13 14 L2 14 Z" fill="#fff" stroke="#7a7a7a" stroke-width="0.9"/><text x="2.8" y="12" font-size="9.5" font-family="Liberation Sans" fill="#2a5aa0" font-weight="bold">.c</text></svg>
<div class="t" style="left:1015.4px;top:363.2px;font-size:10.5px;color:#1e1e1e;transform:scaleX(0.95);transform-origin:0 0;">device.c</div>
<svg class="r" style="left:1085.0px;top:363.5px;" width="8" height="6" viewBox="0 0 8 6"><path d="M0.5 0.5 L3 3 L0.5 5.5 M4 0.5 L6.5 3 L4 5.5" fill="none" stroke="#111" stroke-width="1.3"/></svg>
<div class="t" style="left:1091.5px;top:365.8px;font-size:8.8px;color:#222;-webkit-text-stroke:0;">61</div>
<svg class="r" style="left:1193.5px;top:364.5px;" width="11" height="5" viewBox="0 0 11 5"><rect x="0.6" y="0.6" width="9.4" height="3" rx="0.8" fill="#fff" stroke="#707070" stroke-width="1.1"/></svg>
<svg class="r" style="left:1215.0px;top:364.5px;" width="10" height="10" viewBox="0 0 10 10"><rect x="0.6" y="0.6" width="8.8" height="8.6" fill="#fff" stroke="#707070" stroke-width="1.1"/><rect x="0.6" y="0.6" width="8.8" height="2" fill="#8a8a8a"/></svg>
<div class="r" style="left:317.0px;top:381.5px;width:891.0px;height:208.0px;background:#ffffff;"></div>
<div class="r" style="left:316.3px;top:381.5px;width:10.0px;height:208.0px;background:#7db3d3;background-image:repeating-linear-gradient(45deg, rgba(255,255,255,0.06) 0 1px, transparent 1px 3px);"></div>
<div class="r" style="left:348.8px;top:382.0px;width:858.2px;height:13.0px;background:#0078d7;"></div>
<div class="r" style="left:348.8px;top:395.0px;width:82.8px;height:14.0px;background:#0078d7;"></div>
<div class="r" style="left:348.8px;top:560.0px;width:250.0px;height:13.4px;background:#c7dcae;"></div>
<div class="t" style="left:326.8px;top:383.0px;font-size:10.68px;color:#7a7a7a;font-family:'Liberation Mono',monospace;-webkit-text-stroke:0;">292</div>
<div class="t" style="left:348.8px;top:383.0px;font-size:10.68px;color:#ffffff;font-weight:bold;font-family:'Liberation Mono',monospace;-webkit-text-stroke:0;">__interrupt void</div>
<div class="t" style="left:326.8px;top:396.6px;font-size:10.68px;color:#7a7a7a;font-family:'Liberation Mono',monospace;-webkit-text-stroke:0;">293</div>
<div class="t" style="left:348.8px;top:396.6px;font-size:10.68px;color:#ffffff;font-weight:bold;font-family:'Liberation Mono',monospace;-webkit-text-stroke:0;">canbISR(void)</div>
<div class="t" style="left:326.8px;top:410.2px;font-size:10.68px;color:#7a7a7a;font-family:'Liberation Mono',monospace;-webkit-text-stroke:0;">294</div>
<div class="t" style="left:348.8px;top:410.2px;font-size:10.68px;color:#000;font-family:'Liberation Mono',monospace;-webkit-text-stroke:0;">{</div>
<div class="t" style="left:326.8px;top:423.9px;font-size:10.68px;color:#7a7a7a;font-family:'Liberation Mono',monospace;-webkit-text-stroke:0;">295</div>
<div class="t" style="left:348.8px;top:423.9px;font-size:10.68px;color:#000;font-family:'Liberation Mono',monospace;-webkit-text-stroke:0;">    uint32_t status;</div>
<div class="t" style="left:326.8px;top:437.5px;font-size:10.68px;color:#7a7a7a;font-family:'Liberation Mono',monospace;-webkit-text-stroke:0;">296</div>
<div class="t" style="left:326.8px;top:451.2px;font-size:10.68px;color:#7a7a7a;font-family:'Liberation Mono',monospace;-webkit-text-stroke:0;">297</div>
<div class="t" style="left:348.8px;top:451.2px;font-size:10.68px;color:#3f7f5f;font-family:'Liberation Mono',monospace;-webkit-text-stroke:0;">    //</div>
<div class="t" style="left:326.8px;top:464.8px;font-size:10.68px;color:#7a7a7a;font-family:'Liberation Mono',monospace;-webkit-text-stroke:0;">298</div>
<div class="t" style="left:348.8px;top:464.8px;font-size:10.68px;color:#3f7f5f;font-family:'Liberation Mono',monospace;-webkit-text-stroke:0;">    // Read the CAN-B interrupt status to find the cause of the interrupt</div>
<div class="t" style="left:326.8px;top:478.4px;font-size:10.68px;color:#7a7a7a;font-family:'Liberation Mono',monospace;-webkit-text-stroke:0;">299</div>
<div class="t" style="left:348.8px;top:478.4px;font-size:10.68px;color:#3f7f5f;font-family:'Liberation Mono',monospace;-webkit-text-stroke:0;">    //</div>
<div class="t" style="left:326.8px;top:492.1px;font-size:10.68px;color:#7a7a7a;font-family:'Liberation Mono',monospace;-webkit-text-stroke:0;">300</div>
<div class="t" style="left:348.8px;top:492.1px;font-size:10.68px;color:#000;font-family:'Liberation Mono',monospace;-webkit-text-stroke:0;">    status = CAN_getInterruptCause(CANB_BASE);</div>
<div class="t" style="left:326.8px;top:505.7px;font-size:10.68px;color:#7a7a7a;font-family:'Liberation Mono',monospace;-webkit-text-stroke:0;">301</div>
<div class="t" style="left:326.8px;top:519.4px;font-size:10.68px;color:#7a7a7a;font-family:'Liberation Mono',monospace;-webkit-text-stroke:0;">302</div>
<div class="t" style="left:348.8px;top:519.4px;font-size:10.68px;color:#3f7f5f;font-family:'Liberation Mono',monospace;-webkit-text-stroke:0;">    //</div>
<div class="t" style="left:326.8px;top:533.0px;font-size:10.68px;color:#7a7a7a;font-family:'Liberation Mono',monospace;-webkit-text-stroke:0;">303</div>
<div class="t" style="left:348.8px;top:533.0px;font-size:10.68px;color:#3f7f5f;font-family:'Liberation Mono',monospace;-webkit-text-stroke:0;">    // If the cause is a controller status interrupt, then get the status</div>
<div class="t" style="left:326.8px;top:546.6px;font-size:10.68px;color:#7a7a7a;font-family:'Liberation Mono',monospace;-webkit-text-stroke:0;">304</div>
<div class="t" style="left:348.8px;top:546.6px;font-size:10.68px;color:#3f7f5f;font-family:'Liberation Mono',monospace;-webkit-text-stroke:0;">    //</div>
<div class="t" style="left:326.8px;top:560.3px;font-size:10.68px;color:#7a7a7a;font-family:'Liberation Mono',monospace;-webkit-text-stroke:0;">305</div>
<div class="t" style="left:348.8px;top:560.3px;font-size:10.68px;color:#000;font-family:'Liberation Mono',monospace;-webkit-text-stroke:0;">    </div>
<div class="t" style="left:374.4px;top:560.3px;font-size:10.68px;color:#7f0055;font-weight:bold;font-family:'Liberation Mono',monospace;-webkit-text-stroke:0;">if</div>
<div class="t" style="left:387.3px;top:560.3px;font-size:10.68px;color:#000;font-family:'Liberation Mono',monospace;-webkit-text-stroke:0;">(status == CAN_INT_INT0ID_STATUS)</div>
<div class="t" style="left:326.8px;top:573.9px;font-size:10.68px;color:#7a7a7a;font-family:'Liberation Mono',monospace;-webkit-text-stroke:0;">306</div>
<div class="t" style="left:348.8px;top:573.9px;font-size:10.68px;color:#000;font-family:'Liberation Mono',monospace;-webkit-text-stroke:0;">    {</div>
<svg class="r" style="left:315.5px;top:490.5px;" width="11" height="12" viewBox="0 0 11 12"><circle cx="6" cy="4.5" r="3.5" fill="#a8c8e8" stroke="#2a5a9a" stroke-width="1"/><path d="M1 8 L3 10.5 L7 5.5" fill="none" stroke="#1a3a6a" stroke-width="1.2"/></svg>
<svg class="r" style="left:316.0px;top:563.0px;" width="8" height="8" viewBox="0 0 8 8"><path d="M0.8 2.5 H3.5 V0.8 L7 4 L3.5 7.2 V5.5 H0.8 Z" fill="#a8d0f0" stroke="#1a4a8a" stroke-width="0.9"/></svg>
<div class="r" style="left:1208.3px;top:381.5px;width:13.4px;height:219.0px;background:#f0f0f0;"></div>
<svg class="r" style="left:1210.5px;top:387.0px;" width="9" height="6" viewBox="0 0 9 6"><path d="M1 5 L4.5 1.5 L8 5" fill="none" stroke="#555" stroke-width="1.5"/></svg>
<div class="r" style="left:1208.3px;top:525.8px;width:13.4px;height:15.5px;background:#cdcdcd;"></div>
<svg class="r" style="left:1210.5px;top:579.0px;" width="9" height="6" viewBox="0 0 9 6"><path d="M1 1 L4.5 4.5 L8 1" fill="none" stroke="#555" stroke-width="1.5"/></svg>
<div class="r" style="left:1221.7px;top:381.5px;width:8.3px;height:219.0px;background:#f5f5f5;"></div>
<div class="r" style="left:1224.5px;top:533.0px;width:6.0px;height:2.0px;background:#3a4aca;"></div>
<div class="r" style="left:1224.5px;top:535.0px;width:6.0px;height:4.0px;background:#d8e8c8;"></div>
<div class="r" style="left:317.0px;top:590.8px;width:891.0px;height:10.0px;background:#f0f0f0;"></div>
<svg class="r" style="left:352.0px;top:592.5px;" width="6" height="9" viewBox="0 0 6 9"><path d="M5 1 L1.5 4.5 L5 8" fill="none" stroke="#999" stroke-width="1.5"/></svg>
<svg class="r" style="left:1198.0px;top:592.5px;" width="6" height="9" viewBox="0 0 6 9"><path d="M1 1 L4.5 4.5 L1 8" fill="none" stroke="#999" stroke-width="1.5"/></svg>
</body></html>
